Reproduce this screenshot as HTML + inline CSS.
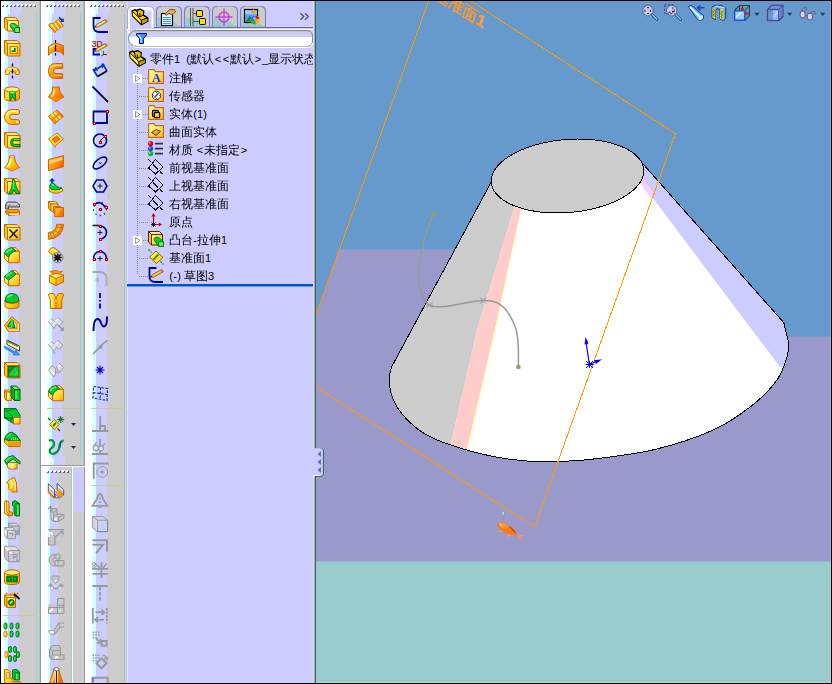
<!DOCTYPE html><html><head><meta charset="utf-8"><title>SolidWorks</title><style>
html,body{margin:0;padding:0;background:#000}body{width:832px;height:684px;overflow:hidden}svg{display:block}text{font-family:"Liberation Sans","WenQuanYi Zen Hei","Noto Sans CJK SC",sans-serif;font-size:12px}.cr{shape-rendering:crispEdges}
</style></head><body>
<svg width="832" height="684" viewBox="0 0 832 684">
<defs>
<linearGradient id="tabg" x1="0" y1="0" x2="0" y2="1"><stop offset="0" stop-color="#cccccc"/><stop offset="0.55" stop-color="#cccccc"/><stop offset="1" stop-color="#99cccc"/></linearGradient>
<linearGradient id="taba" x1="0" y1="0" x2="0" y2="1"><stop offset="0" stop-color="#ffffff"/><stop offset="0.6" stop-color="#ffffff"/><stop offset="1" stop-color="#e0e0ff"/></linearGradient>
<linearGradient id="fbox" x1="0" y1="0" x2="0" y2="1"><stop offset="0" stop-color="#bbbbbb"/><stop offset="0.12" stop-color="#cccccc"/><stop offset="0.16" stop-color="#ccccff"/><stop offset="0.4" stop-color="#ccccff"/><stop offset="0.44" stop-color="#ffffff"/><stop offset="1" stop-color="#ffffff"/></linearGradient>
<linearGradient id="tabhl" x1="0" y1="0" x2="0" y2="1"><stop offset="0" stop-color="#e8ffff"/><stop offset="1" stop-color="#ccccff"/></linearGradient>
<linearGradient id="fold" x1="0" y1="0" x2="1" y2="1"><stop offset="0" stop-color="#ffffaa"/><stop offset="0.45" stop-color="#ffee77"/><stop offset="1" stop-color="#ffbb22"/></linearGradient>
<clipPath id="cpanel"><rect x="127" y="1" width="186" height="682"/></clipPath>
<clipPath id="cview"><rect x="316" y="1" width="515" height="682"/></clipPath>
<clipPath id="ctb"><rect x="1" y="1" width="126" height="682"/></clipPath>
</defs>
<rect x="0" y="0" width="832" height="684" fill="#000" />
<g id="toolbars" clip-path="url(#ctb)" class="cr">
<rect x="-3" y="1" width="10" height="13" fill="#ffffff" /><rect x="7" y="1" width="3" height="13" fill="#ccffff" /><rect x="10" y="1" width="11" height="13" fill="#ccccff" /><rect x="21" y="1" width="18" height="13" fill="#cccccc" /><rect x="39" y="1" width="1" height="13" fill="#99cccc" /><rect x="40" y="1" width="1" height="13" fill="#999999" /><rect x="-3" y="14" width="8" height="669" fill="#ffffff" /><rect x="5" y="14" width="3" height="669" fill="#ccffff" /><rect x="8" y="14" width="11" height="669" fill="#ccccff" /><rect x="19" y="14" width="17" height="669" fill="#cccccc" /><rect x="36" y="14" width="1" height="669" fill="#99cccc" /><rect x="37" y="14" width="2" height="669" fill="#cccccc" /><rect x="39" y="14" width="1" height="669" fill="#99cccc" /><rect x="40" y="14" width="1" height="669" fill="#999999" />
<rect x="41" y="1" width="10" height="13" fill="#ffffff" /><rect x="51" y="1" width="3" height="13" fill="#ccffff" /><rect x="54" y="1" width="11" height="13" fill="#ccccff" /><rect x="65" y="1" width="18" height="13" fill="#cccccc" /><rect x="83" y="1" width="1" height="13" fill="#99cccc" /><rect x="84" y="1" width="1" height="13" fill="#999999" /><rect x="41" y="14" width="8" height="444" fill="#ffffff" /><rect x="49" y="14" width="3" height="444" fill="#ccffff" /><rect x="52" y="14" width="11" height="444" fill="#ccccff" /><rect x="63" y="14" width="17" height="444" fill="#cccccc" /><rect x="80" y="14" width="1" height="444" fill="#99cccc" /><rect x="81" y="14" width="2" height="444" fill="#cccccc" /><rect x="83" y="14" width="1" height="444" fill="#99cccc" /><rect x="84" y="14" width="1" height="444" fill="#999999" /><rect x="41" y="458" width="10" height="7" fill="#ffffff" /><rect x="51" y="458" width="3" height="7" fill="#ccffff" /><rect x="54" y="458" width="11" height="7" fill="#ccccff" /><rect x="65" y="458" width="18" height="7" fill="#cccccc" /><rect x="83" y="458" width="1" height="7" fill="#99cccc" /><rect x="84" y="458" width="1" height="7" fill="#999999" />
<rect x="85" y="1" width="10" height="13" fill="#ffffff" /><rect x="95" y="1" width="3" height="13" fill="#ccffff" /><rect x="98" y="1" width="11" height="13" fill="#ccccff" /><rect x="109" y="1" width="18" height="13" fill="#cccccc" /><rect x="85" y="14" width="8" height="669" fill="#ffffff" /><rect x="93" y="14" width="3" height="669" fill="#ccffff" /><rect x="96" y="14" width="11" height="669" fill="#ccccff" /><rect x="107" y="14" width="17" height="669" fill="#cccccc" /><rect x="124" y="14" width="1" height="669" fill="#99cccc" /><rect x="125" y="14" width="2" height="669" fill="#cccccc" />
<rect x="2" y="5" width="2" height="2" fill="#666" /><rect x="1" y="4" width="2" height="2" fill="#fff" /><rect x="6" y="5" width="2" height="2" fill="#666" /><rect x="5" y="4" width="2" height="2" fill="#fff" /><rect x="10" y="5" width="2" height="2" fill="#666" /><rect x="9" y="4" width="2" height="2" fill="#fff" /><rect x="14" y="5" width="2" height="2" fill="#666" /><rect x="13" y="4" width="2" height="2" fill="#fff" /><rect x="18" y="5" width="2" height="2" fill="#666" /><rect x="17" y="4" width="2" height="2" fill="#fff" /><rect x="22" y="5" width="2" height="2" fill="#666" /><rect x="21" y="4" width="2" height="2" fill="#fff" /><rect x="26" y="5" width="2" height="2" fill="#666" /><rect x="25" y="4" width="2" height="2" fill="#fff" /><rect x="30" y="5" width="2" height="2" fill="#666" /><rect x="29" y="4" width="2" height="2" fill="#fff" /><rect x="34" y="5" width="2" height="2" fill="#666" /><rect x="33" y="4" width="2" height="2" fill="#fff" /><rect x="46" y="5" width="2" height="2" fill="#666" /><rect x="45" y="4" width="2" height="2" fill="#fff" /><rect x="50" y="5" width="2" height="2" fill="#666" /><rect x="49" y="4" width="2" height="2" fill="#fff" /><rect x="54" y="5" width="2" height="2" fill="#666" /><rect x="53" y="4" width="2" height="2" fill="#fff" /><rect x="58" y="5" width="2" height="2" fill="#666" /><rect x="57" y="4" width="2" height="2" fill="#fff" /><rect x="62" y="5" width="2" height="2" fill="#666" /><rect x="61" y="4" width="2" height="2" fill="#fff" /><rect x="66" y="5" width="2" height="2" fill="#666" /><rect x="65" y="4" width="2" height="2" fill="#fff" /><rect x="70" y="5" width="2" height="2" fill="#666" /><rect x="69" y="4" width="2" height="2" fill="#fff" /><rect x="74" y="5" width="2" height="2" fill="#666" /><rect x="73" y="4" width="2" height="2" fill="#fff" /><rect x="78" y="5" width="2" height="2" fill="#666" /><rect x="77" y="4" width="2" height="2" fill="#fff" /><rect x="90" y="5" width="2" height="2" fill="#666" /><rect x="89" y="4" width="2" height="2" fill="#fff" /><rect x="94" y="5" width="2" height="2" fill="#666" /><rect x="93" y="4" width="2" height="2" fill="#fff" /><rect x="98" y="5" width="2" height="2" fill="#666" /><rect x="97" y="4" width="2" height="2" fill="#fff" /><rect x="102" y="5" width="2" height="2" fill="#666" /><rect x="101" y="4" width="2" height="2" fill="#fff" /><rect x="106" y="5" width="2" height="2" fill="#666" /><rect x="105" y="4" width="2" height="2" fill="#fff" /><rect x="110" y="5" width="2" height="2" fill="#666" /><rect x="109" y="4" width="2" height="2" fill="#fff" /><rect x="114" y="5" width="2" height="2" fill="#666" /><rect x="113" y="4" width="2" height="2" fill="#fff" /><rect x="118" y="5" width="2" height="2" fill="#666" /><rect x="117" y="4" width="2" height="2" fill="#fff" /><rect x="122" y="5" width="2" height="2" fill="#666" /><rect x="121" y="4" width="2" height="2" fill="#fff" />
<rect x="40" y="465" width="45" height="1" fill="#999999" /><rect x="41" y="466" width="44" height="1" fill="#ffffff" />
<rect x="41" y="467" width="7" height="216" fill="#ffffff"/><rect x="48" y="467" width="2" height="216" fill="#ccffff"/><rect x="50" y="467" width="8" height="216" fill="#ccccff"/><rect x="58" y="467" width="13" height="216" fill="#cccccc"/><rect x="71" y="467" width="1" height="216" fill="#99cccc"/><rect x="72" y="467" width="1" height="216" fill="#ffffff"/>
<rect x="73" y="467" width="11" height="45" fill="#ccccff"/><rect x="73" y="512" width="11" height="171" fill="#cccccc"/><rect x="84" y="467" width="1" height="216" fill="#999999"/>
<rect x="47" y="471" width="2" height="2" fill="#666"/><rect x="46" y="470" width="2" height="2" fill="#fff"/>
<rect x="51" y="471" width="2" height="2" fill="#666"/><rect x="50" y="470" width="2" height="2" fill="#fff"/>
<rect x="55" y="471" width="2" height="2" fill="#666"/><rect x="54" y="470" width="2" height="2" fill="#fff"/>
<rect x="59" y="471" width="2" height="2" fill="#666"/><rect x="58" y="470" width="2" height="2" fill="#fff"/>
<rect x="63" y="471" width="2" height="2" fill="#666"/><rect x="62" y="470" width="2" height="2" fill="#fff"/>
<rect x="67" y="471" width="2" height="2" fill="#666"/><rect x="66" y="470" width="2" height="2" fill="#fff"/>
</g>
<g id="icons" clip-path="url(#ctb)">
<defs><linearGradient id="yg" x1="0" y1="0" x2="1" y2="1"><stop offset="0" stop-color="#ffff99"/><stop offset="0.5" stop-color="#ffdd33"/><stop offset="1" stop-color="#ffaa00"/></linearGradient><linearGradient id="yh" x1="0" y1="0" x2="1" y2="0.6"><stop offset="0" stop-color="#ffee44"/><stop offset="0.6" stop-color="#ffcc00"/><stop offset="1" stop-color="#ff9900"/></linearGradient><linearGradient id="og" x1="0" y1="0" x2="1" y2="0.5"><stop offset="0" stop-color="#ffcc33"/><stop offset="0.5" stop-color="#ff9900"/><stop offset="1" stop-color="#ff6600"/></linearGradient></defs>
<g transform="translate(4,17)"><path d="M3.5 3.5L0.5 0.5H11.5L14.5 3.5Z" fill="#ffee77" stroke="#cc6600" stroke-width="1" /><path d="M3.5 3.5L0.5 0.5V11L3.5 14Z" fill="#ffcc00" stroke="#cc6600" stroke-width="1" /><path d="M3.5 3.5H14.5V14H3.5Z" fill="url(#yg)" stroke="#cc6600" stroke-width="1" /><path d="M4.5 4.5H13.5V13H4.5Z" fill="#ffffcc" opacity="0.6"/><path d="M6.2 7.5L7.7 6L11 6.7L15.5 10.7V15.5H10.7L6.2 9.2Z" fill="#00cc33" stroke="#006600" stroke-width="0.8" stroke-linejoin="miter"/><path d="M10.7 10.7H15.5V15.5H10.7Z" fill="#66ee66" stroke="#006600" stroke-width="0.8" /><path d="M7.5 7.3L11 10.2" fill="none" stroke="#66ee66" stroke-width="1.2" /></g>
<g transform="translate(4,40)"><path d="M3.5 3.5L0.5 0.5H13L16 3.5Z" fill="#ffee77" stroke="#cc6600" stroke-width="1" /><path d="M3.5 3.5L0.5 0.5V13L3.5 16Z" fill="#ffcc00" stroke="#cc6600" stroke-width="1" /><path d="M3.5 3.5H16V16H3.5Z" fill="url(#yg)" stroke="#cc6600" stroke-width="1" /><path d="M6 6.5H13.5V13.5H6Z" fill="#ffdd55" stroke="#cc7700" stroke-width="1.2" /><path d="M7.5 8H12V12H7.5Z" fill="#00cc33" /><path d="M7.5 8H10V10H7.5Z" fill="#ffffff" /><path d="M10.5 8V11.5H8" fill="none" stroke="#006600" stroke-width="0.8" /></g>
<g transform="translate(4,63)"><path d="M1 9.5Q1 6 4 5Q8 3 12.5 5Q15.5 6 15.5 9.5A2.2 2.2 0 0 1 11 9.5Q11 8.5 8.3 8.5Q5.5 8.5 5.5 9.5A2.2 2.2 0 0 1 1 9.5Z" fill="url(#yh)" stroke="#cc6600" stroke-width="1" /><path d="M3 6.5Q8 4 13 6.5" fill="none" stroke="#ffffaa" stroke-width="1.3" /><circle cx="3.2" cy="9.6" r="1.3" fill="#ffee77"/><circle cx="13.3" cy="9.6" r="1.3" fill="#ffee77"/><path d="M8.5 0.5V16" fill="none" stroke="#000" stroke-width="1.2" stroke-dasharray="3 2 5 2"/></g>
<g transform="translate(4,86)"><path d="M0.5 3.5V12.5A7.5 2.6 0 0 0 15.5 12.5V3.5Z" fill="url(#yh)" stroke="#cc6600" stroke-width="1" /><ellipse cx="8" cy="3.5" rx="7.5" ry="2.6" fill="#ffee77" stroke="#cc6600" stroke-width="1"/><path d="M5.5 6.5L8 5L11.5 6.5V14.5L8.5 11L6 15Z" fill="#00cc33" stroke="#006600" stroke-width="0.8" /><path d="M8.3 5V11" fill="none" stroke="#006600" stroke-width="0.8" /><path d="M5.5 6.5L8 5L11.5 6.5L8.3 8Z" fill="#66ee66" /></g>
<g transform="translate(4,109)"><path d="M13.2 0.5H8A7.5 7.5 0 0 0 8 15.5H13.2A2.5 2.5 0 0 0 13.2 10.5H8A2.5 2.5 0 0 1 8 5.5H13.2A2.5 2.5 0 0 0 13.2 0.5Z" fill="url(#yh)" stroke="#cc6600" stroke-width="1" /><path d="M2.5 6Q4 2.5 8.5 2.3H12" fill="none" stroke="#ffffaa" stroke-width="1.6" /><circle cx="13.2" cy="3" r="1.4" fill="#ffee88"/><circle cx="13.2" cy="13" r="1.4" fill="#ffee88"/></g>
<g transform="translate(4,132)"><path d="M3.5 3.5L0.5 0.5H13L16 3.5Z" fill="#ffee77" stroke="#cc6600" stroke-width="1" /><path d="M3.5 3.5L0.5 0.5V13L3.5 16Z" fill="#ffcc00" stroke="#cc6600" stroke-width="1" /><path d="M3.5 3.5H16V16H3.5Z" fill="url(#yg)" stroke="#cc6600" stroke-width="1" /><path d="M16 6.5H10.5A4 4 0 0 0 10.5 14.5H16V12.5H10.5A2 2 0 0 1 10.5 8.5H16Z" fill="#00cc33" stroke="#006600" stroke-width="0.8" /><path d="M10.5 7.3H15.5" fill="none" stroke="#66ee66" stroke-width="1" /></g>
<g transform="translate(4,155)"><path d="M5.5 1Q8 -0.3 10.5 1Q10.5 8 15.5 12.5L8 16L0.5 12.5Q5.5 8 5.5 1Z" fill="url(#yh)" stroke="#cc6600" stroke-width="1" /><ellipse cx="8" cy="1.5" rx="2.2" ry="0.9" fill="#ffffcc" stroke="#cc6600" stroke-width="0.5"/><path d="M6.8 4Q6.5 9 3.5 12" fill="none" stroke="#ffffaa" stroke-width="1.5" /><path d="M0.5 12.5L8 16L15.5 12.5L8 13.8Z" fill="#ff9900" /></g>
<g transform="translate(4,178)"><path d="M3.5 3.5L0.5 0.5H13L16 3.5Z" fill="#ffee77" stroke="#cc6600" stroke-width="1" /><path d="M3.5 3.5L0.5 0.5V13L3.5 16Z" fill="#ffcc00" stroke="#cc6600" stroke-width="1" /><path d="M3.5 3.5H16V16H3.5Z" fill="url(#yg)" stroke="#cc6600" stroke-width="1" /><path d="M8.5 1Q11 1 11 4Q11.5 10 16 15.5L12 15.5L9.8 12L7.5 16H4.5Q8.5 10 8.5 4Z" fill="#00cc33" stroke="#006600" stroke-width="0.8" /><path d="M9.5 3V11" fill="none" stroke="#66ee66" stroke-width="1.2" /></g>
<g transform="translate(4,201)"><path d="M1.5 4L3 1H12L15.5 3.5V6H4.5V8H1.5Z" fill="#aaaaaa" stroke="#444444" stroke-width="0.9" /><path d="M3 3H13.5" fill="none" stroke="#e0e0e0" stroke-width="1.4" /><path d="M4.5 6L5.5 3.5" fill="none" stroke="#444" stroke-width="0.7" /><path d="M4 8.5H14.5L15.5 10L13 11.5H4L1 10.5Z" fill="#ff9900" stroke="#cc6600" stroke-width="0.9" /><path d="M1 11L4.5 14.5L15.5 13.5V10.5L12.5 12H4Z" fill="#ffcc00" stroke="#cc6600" stroke-width="0.9" /><path d="M4.5 12.5V14.5" fill="none" stroke="#cc6600" stroke-width="0.8" /><path d="M5.5 13.3H14.5" fill="none" stroke="#ffffaa" stroke-width="1.2" /></g>
<g transform="translate(4,224)"><path d="M3.5 3.5L0.5 0.5H13L16 3.5Z" fill="#ffee77" stroke="#cc6600" stroke-width="1" /><path d="M3.5 3.5L0.5 0.5V13L3.5 16Z" fill="#ffcc00" stroke="#cc6600" stroke-width="1" /><path d="M3.5 3.5H16V16H3.5Z" fill="url(#yg)" stroke="#cc6600" stroke-width="1" /><path d="M5.5 5.5L13.5 14M13.5 5.5L5.5 14" fill="none" stroke="#222233" stroke-width="1.8" /></g>
<g transform="translate(4,247)"><path d="M0.4 6.5L4.7 10.1V15.7L0.4 11.7Z" fill="#ffee55" stroke="#cc6600" stroke-width="1" /><path d="M7.9 0.6H11.9L15.4 4.5L12 4Z" fill="#ffee66" stroke="#cc6600" stroke-width="1" /><path d="M4.7 15.7V10.1Q6 5 12 4L15.4 4.5V15.7Z" fill="url(#yg)" stroke="#cc6600" stroke-width="1" /><path d="M0.4 6.5Q1.5 1.5 7.9 0.6L12 4Q6 5 4.7 10.1Z" fill="#00cc33" stroke="#006600" stroke-width="0.8" /><path d="M2 6Q3.5 3 8 2" fill="none" stroke="#66ee66" stroke-width="1.3" /></g>
<g transform="translate(4,270)"><path d="M0.4 6.5L4.7 10.1V15.7L0.4 11.7Z" fill="#ffee55" stroke="#cc6600" stroke-width="1" /><path d="M7.9 0.6H11.9L15.4 4.5L12 4Z" fill="#ffee66" stroke="#cc6600" stroke-width="1" /><path d="M4.7 15.7V10.1L12 4L15.4 4.5V15.7Z" fill="url(#yg)" stroke="#cc6600" stroke-width="1" /><path d="M0.4 6.5L7.9 0.6L12 4L4.7 10.1Z" fill="#00cc33" stroke="#006600" stroke-width="0.8" /><path d="M2 6.5L8 2" fill="none" stroke="#66ee66" stroke-width="1.3" /></g>
<g transform="translate(4,293)"><path d="M1 8V13.3A7 2.4 0 0 0 15 13.3V8Z" fill="url(#yh)" stroke="#cc6600" stroke-width="1" /><ellipse cx="8" cy="8" rx="7" ry="2.4" fill="#ffcc00" stroke="#cc6600" stroke-width="1"/><path d="M1 8Q1 0.5 8 0.5Q15 0.5 15 8Q8 11.5 1 8Z" fill="#00cc33" stroke="#006600" stroke-width="0.8" /><path d="M3.5 4.5Q5.5 2 8.5 2.5" fill="none" stroke="#66ee66" stroke-width="1.6" /></g>
<g transform="translate(4,316)"><path d="M7.9 0.6L15.4 7.3V15.3H4.3L0.4 9.3Z" fill="#ffcc00" stroke="#cc6600" stroke-width="1" /><path d="M8.2 3.2L12.8 8.2V12.8H5.6L2.8 9.6Z" fill="#ccccff" stroke="#cc6600" stroke-width="0.8" /><path d="M8.3 3L11 11.8L3.6 10.4Z" fill="#00cc33" stroke="#006600" stroke-width="0.8" /><path d="M8.3 3L7.5 11" fill="none" stroke="#66ee66" stroke-width="1.1" /><path d="M5 14.2H14.5M14.3 8V14" fill="none" stroke="#ffffaa" stroke-width="1.1" /></g>
<g transform="translate(4,339)"><path d="M3 1L15.5 7V12L3 5.5Z" fill="#ffff99" stroke="#333333" stroke-width="0.9" /><path d="M5 2V4M7 3V5M9 4V6M11 5V7M13 6V8" fill="none" stroke="#222" stroke-width="1" /><path d="M0.5 7L11 13L12 11L15.5 16H9L10 14.5L0.5 9Z" fill="#3399ff" stroke="#0066cc" stroke-width="0.6" /></g>
<g transform="translate(4,362)"><path d="M3.5 3.5L0.5 0.5H13L16 3.5Z" fill="#ffee77" stroke="#cc6600" stroke-width="1" /><path d="M3.5 3.5L0.5 0.5V13L3.5 16Z" fill="#ffcc00" stroke="#cc6600" stroke-width="1" /><path d="M3.5 3.5H16V16H3.5Z" fill="url(#yg)" stroke="#cc6600" stroke-width="1" /><path d="M4.5 4.5H15V15H4.5Z" fill="#00cc33" stroke="#006600" stroke-width="0.8" /><path d="M4.5 4.5H11V11H4.5Z" fill="#009922" stroke="#006600" stroke-width="0.7" /><path d="M11 11L15 15" fill="none" stroke="#006600" stroke-width="0.8" /><path d="M11.5 5L14.5 14L5 11.5Z" fill="#66ee66" opacity="0.5"/></g>
<g transform="translate(4,385)"><path d="M2.5 7L0.5 5H5.5L7.5 7Z" fill="#ffee77" stroke="#cc6600" stroke-width="1" /><path d="M2.5 7L0.5 5V13.5L2.5 15.5Z" fill="#ffcc00" stroke="#cc6600" stroke-width="1" /><path d="M2.5 7H7.5V15.5H2.5Z" fill="url(#yg)" stroke="#cc6600" stroke-width="1" /><path d="M10.5 4.5L7 1H12.5L16 4.5Z" fill="#66ee66" stroke="#006600" stroke-width="1" /><path d="M10.5 4.5L7 1V12L10.5 15.5Z" fill="#00aa22" stroke="#006600" stroke-width="1" /><path d="M10.5 4.5H16V15.5H10.5Z" fill="#00cc33" stroke="#006600" stroke-width="1" /><path d="M12 6V14" fill="none" stroke="#66ee66" stroke-width="1.4" /><path d="M4 8.5V14" fill="none" stroke="#ffffaa" stroke-width="1.2" /></g>
<g transform="translate(4,408)"><path d="M0.5 0.5H12L16 7V10H10L0.5 10Z" fill="#00cc33" stroke="#006600" stroke-width="0.9" /><path d="M0.5 0.5L10.5 10.5M12 0.5L3 3" fill="none" stroke="#006600" stroke-width="0.7" /><path d="M0.5 10L9.5 15.5V10Z" fill="#00aa22" stroke="#006600" stroke-width="0.8" /><path d="M9.5 9.5H16V16H9.5Z" fill="url(#yg)" stroke="#cc6600" stroke-width="1" /></g>
<g transform="translate(4,431)"><path d="M0.5 8.5L5 13H16V8.5Z" fill="#ffcc00" stroke="#cc6600" stroke-width="1" /><path d="M5 9.5H16V15.5H5L0.5 11.5V8.5Z" fill="#ffcc00" stroke="#cc6600" stroke-width="1" /><path d="M5 9.5V15.5" fill="none" stroke="#cc6600" stroke-width="0.8" /><path d="M6 10.5H15.5V15H6Z" fill="#ff9900" /><path d="M0.5 8Q2 2 8 1Q13 3 16 9.5H5Z" fill="#00cc33" stroke="#006600" stroke-width="0.9" /><path d="M5 9.5Q7 5.5 11 5.5Q14.5 6.5 16 9.5" fill="#00cc33" stroke="#006600" stroke-width="0.8" /><path d="M2.5 6L7.5 2.5M7.5 9V6.5M9.5 9V6M11.5 9V6M13.5 9V7.5" fill="none" stroke="#66ee66" stroke-width="1" /></g>
<g transform="translate(4,454)"><path d="M3.5 8.5H13V15H5.5L3.5 13Z" fill="url(#yg)" stroke="#cc6600" stroke-width="1" /><path d="M7 9.5H9.5V14.5H7Z" fill="#ffffcc" /><path d="M0.5 6.5Q4 2 9 1.5Q12 4 16 7.5V10Q13 8.5 9.5 5Q6 6 2.5 10.5Z" fill="#00cc33" stroke="#006600" stroke-width="0.9" /><path d="M2 7Q5 3.5 8.5 3" fill="none" stroke="#66ee66" stroke-width="1.2" /></g>
<g transform="translate(4,477)"><path d="M7 1.5L10.5 0.5Q13.5 6 13 15.5L8.5 15L4 11.5Q5.5 9 4.5 7L2.5 5.5Z" fill="url(#yh)" stroke="#cc6600" stroke-width="1" /><path d="M6.5 3Q9 6 7.5 11M9.5 2Q12 7 11 13.5" fill="none" stroke="#ffffcc" stroke-width="1.3" /><path d="M4 11.5L8.5 15L13 15.5" fill="none" stroke="#ff9900" stroke-width="1" /></g>
<g transform="translate(4,500)"><path d="M0.5 1.5L2.5 0.5L5 2V11.5L8.5 12.5V15.5L4.5 16L0.5 13Z" fill="url(#yh)" stroke="#cc6600" stroke-width="1" /><path d="M2.5 0.5V12L4.5 13.5V16" fill="none" stroke="#cc6600" stroke-width="0.8" /><path d="M1.5 2.5V12" fill="none" stroke="#ffffaa" stroke-width="1.2" /><path d="M8.5 2L11 0.5L15.5 3.5V16H12L10 14.5V6.5L8.5 5.5Z" fill="#00cc33" stroke="#006600" stroke-width="0.9" /><path d="M12 3.5V16M12 3.5L15.5 3.5" fill="none" stroke="#006600" stroke-width="0.7" /><path d="M13.8 5V15" fill="none" stroke="#66ee66" stroke-width="1.3" /></g>
<g transform="translate(4,523)"><path d="M7.5 3.2L4.5 0.2H12.4L15.4 3.2Z" fill="#d8d8d8" stroke="#999999" stroke-width="1" /><path d="M7.5 3.2L4.5 0.2V8.7L7.5 11.7Z" fill="#c0c0c0" stroke="#999999" stroke-width="1" /><path d="M7.5 3.2H15.4V11.7H7.5Z" fill="#c8c8c8" stroke="#999999" stroke-width="1" /><path d="M12 8.5L15 5V11.3L12 11.3Z" fill="#9999cc" /><path d="M3.5 7.5L0.5 4.5H8.5L11.5 7.5Z" fill="#dddddd" stroke="#999999" stroke-width="1" /><path d="M3.5 7.5L0.5 4.5V12.7L3.5 15.7Z" fill="#ccddee" stroke="#999999" stroke-width="1" /><path d="M3.5 7.5H11.5V15.7H3.5Z" fill="#cccccc" stroke="#999999" stroke-width="1" /><path d="M1.2 6.5V11.5" fill="none" stroke="#ffffff" stroke-width="1.4" /><path d="M5 10.5H8.5V13" fill="none" stroke="#9999cc" stroke-width="1.2" /><path d="M4.5 8.5L7 8.5" fill="none" stroke="#ccffff" stroke-width="1.2" /></g>
<g transform="translate(4,546)"><path d="M4.7 4.5L0.5 0.3H11.2L15.4 4.5Z" fill="#dddddd" stroke="#999999" stroke-width="1" /><path d="M4.7 4.5L0.5 0.3V11.5L4.7 15.7Z" fill="#c4c4d8" stroke="#999999" stroke-width="1" /><path d="M4.7 4.5H15.4V15.7H4.7Z" fill="#cccccc" stroke="#999999" stroke-width="1" /><path d="M1.5 1.5L4.5 4.5" fill="none" stroke="#ffffff" stroke-width="1.8" /><path d="M7 8.5H13V11H9.5V13" fill="none" stroke="#9999cc" stroke-width="1.3" /><path d="M12 12.5L15 15.3H12Z" fill="#9999cc" /><path d="M5.5 6L8 8" fill="none" stroke="#ffffff" stroke-width="1.4" /></g>
<g transform="translate(4,569)"><path d="M0.5 3.5V13A7.5 2.6 0 0 0 15.5 13V3.5Z" fill="url(#yh)" stroke="#cc6600" stroke-width="1" /><ellipse cx="8" cy="3.5" rx="7.5" ry="2.6" fill="#ffee77" stroke="#cc6600" stroke-width="1"/><path d="M2.5 7H13.5V13H2.5Z" fill="#00cc33" stroke="#006600" stroke-width="0.7" /><path d="M7.5 8H4V12H7.5V10.3H6M9.5 8H12.5V12H9.5Z" fill="none" stroke="#007700" stroke-width="1.4" /></g>
<g transform="translate(4,592)"><path d="M3 5.5L0.5 3H9L11.5 5.5Z" fill="#ffee77" stroke="#cc6600" stroke-width="1" /><path d="M3 5.5L0.5 3V13L3 15.5Z" fill="#ffcc00" stroke="#cc6600" stroke-width="1" /><path d="M3 5.5H11.5V15.5H3Z" fill="url(#yg)" stroke="#cc6600" stroke-width="1" /><circle cx="7.3" cy="10.5" r="3" fill="#009922" stroke="#005500" stroke-width="0.8"/><path d="M6 11.5L8.5 9" fill="none" stroke="#ccffcc" stroke-width="1.2" /><path d="M9 1L15.5 7" fill="none" stroke="#111111" stroke-width="2" /><path d="M8.5 0.5L10 2" fill="none" stroke="#ffcc00" stroke-width="2" /><path d="M1.5 1.5h2M2.5 0.5v2M5.5 2.5h2M6.5 1.5v2M12.5 1.5h2M13.5 0.5v2" fill="none" stroke="#ff6600" stroke-width="1" /></g>
<g transform="translate(4,623)"><rect x="0" y="0" width="3" height="6" rx="1.5" fill="#00cc33" stroke="#006600" stroke-width="0.8"/><path d="M1 1.5v3" fill="none" stroke="#66ee66" stroke-width="0.8" /><rect x="6" y="0" width="3" height="6" rx="1.5" fill="#00cc33" stroke="#006600" stroke-width="0.8"/><path d="M7 1.5v3" fill="none" stroke="#66ee66" stroke-width="0.8" /><rect x="12" y="0" width="3" height="6" rx="1.5" fill="#00cc33" stroke="#006600" stroke-width="0.8"/><path d="M13 1.5v3" fill="none" stroke="#66ee66" stroke-width="0.8" /><rect x="0" y="8" width="3" height="6" rx="1.5" fill="#ffcc00" stroke="#cc6600" stroke-width="0.8"/><path d="M1 9.5v3" fill="none" stroke="#ffffaa" stroke-width="0.8" /><rect x="6" y="8" width="3" height="6" rx="1.5" fill="#00cc33" stroke="#006600" stroke-width="0.8"/><path d="M7 9.5v3" fill="none" stroke="#66ee66" stroke-width="0.8" /><rect x="12" y="8" width="3" height="6" rx="1.5" fill="#00cc33" stroke="#006600" stroke-width="0.8"/><path d="M13 9.5v3" fill="none" stroke="#66ee66" stroke-width="0.8" /></g>
<g transform="translate(4,646)"><rect x="4.5" y="0.5" width="3" height="6" rx="1.5" fill="#00cc33" stroke="#006600" stroke-width="0.8"/><path d="M5.5 2v3" fill="none" stroke="#66ee66" stroke-width="0.8" /><rect x="9.5" y="0.5" width="3" height="6" rx="1.5" fill="#00cc33" stroke="#006600" stroke-width="0.8"/><path d="M10.5 2v3" fill="none" stroke="#66ee66" stroke-width="0.8" /><rect x="12.5" y="5.5" width="3" height="6" rx="1.5" fill="#00cc33" stroke="#006600" stroke-width="0.8"/><path d="M13.5 7v3" fill="none" stroke="#66ee66" stroke-width="0.8" /><rect x="9.5" y="9.5" width="3" height="6" rx="1.5" fill="#00cc33" stroke="#006600" stroke-width="0.8"/><path d="M10.5 11v3" fill="none" stroke="#66ee66" stroke-width="0.8" /><rect x="4.5" y="9.5" width="3" height="6" rx="1.5" fill="#00cc33" stroke="#006600" stroke-width="0.8"/><path d="M5.5 11v3" fill="none" stroke="#66ee66" stroke-width="0.8" /><rect x="1" y="5.5" width="3" height="6" rx="1.5" fill="#ffcc00" stroke="#cc6600" stroke-width="0.8"/><path d="M2 7v3" fill="none" stroke="#ffffaa" stroke-width="0.8" /></g>
<g transform="translate(4,669)"><path d="M0.5 0.5H4L6 2.5V9L9 10.5V12.5H16V16H3L0.5 13Z" fill="url(#yh)" stroke="#cc6600" stroke-width="1" /><path d="M2.5 3.5H5V9.5H2.5Z" fill="#ffff99" stroke="#cc6600" stroke-width="0.6" /><path d="M8.5 1L10.5 0.5H13L15.5 3V11H11L8.5 9Z" fill="#00cc33" stroke="#006600" stroke-width="0.9" /><path d="M11 3.5H15.5M11 3.5V11" fill="none" stroke="#006600" stroke-width="0.7" /><path d="M12.8 5V10" fill="none" stroke="#66ee66" stroke-width="1.4" /></g>
<rect x="3" y="615" width="34" height="1" fill="#cccc99"/>
<g transform="translate(48,17)"><path d="M0.5 8Q3 5 5.5 6.5Q8 3.5 10.7 2.6L15.5 8.9Q12.5 10 10.5 12.5Q8.5 12.5 6.8 15.7Z" fill="url(#og)" stroke="#cc6600" stroke-width="0.9" /><path d="M3 7L8 13.5M6.5 5.8L11 12M9.5 3.8L14 9.5" fill="none" stroke="#ffee66" stroke-width="1.5" /><path d="M11 0.5L14.5 3.5" fill="none" stroke="#0033cc" stroke-width="1.8" /><path d="M15.8 1.2V5H11.8Z" fill="#0033cc" /></g>
<g transform="translate(48,40)"><path d="M0.5 6.5Q4 3.5 8 3.5Q12 3.5 15.5 6V15Q13 11 8 11Q3.5 11 0.5 15.3Z" fill="url(#og)" stroke="#cc6600" stroke-width="1" /><path d="M2 8Q4.5 5.5 7 5.2" fill="none" stroke="#ffee77" stroke-width="1.5" /><path d="M7.5 0V15.5" fill="none" stroke="#000" stroke-width="1.2" stroke-dasharray="3 2 6 2"/></g>
<g transform="translate(48,63)"><path d="M14.7 0.5H7.5Q0.5 0.5 0.5 8Q0.5 15.5 7.5 15.5H14.7V10.5H8Q5.5 10.5 5.5 8Q5.5 5.5 8 5.5H14.7Z" fill="url(#og)" stroke="#cc6600" stroke-width="1" /><path d="M2.5 5Q4 2.5 8 2.3H13.5" fill="none" stroke="#ffdd66" stroke-width="1.5" /><path d="M6 12.5H14" fill="none" stroke="#ffcc55" stroke-width="1.2" /></g>
<g transform="translate(48,86)"><path d="M4.8 0.5Q8 2.5 11.1 0.5Q10.5 6 15.8 11L8 15.8L0.4 11Q5.5 6 4.8 0.5Z" fill="url(#og)" stroke="#cc6600" stroke-width="1" /><path d="M6.5 3Q6.5 8 3.5 11" fill="none" stroke="#ffdd88" stroke-width="1.6" /><path d="M0.4 11L8 15.8L15.8 11Q8 13.5 0.4 11Z" fill="#ff8800" /></g>
<g transform="translate(48,109)"><path d="M0.4 7.3L9.1 1L15.5 7.3L6.8 14.9Z" fill="url(#og)" stroke="#cc6600" stroke-width="0.9" /><path d="M3.5 5L9.5 11.5M6.5 3L12.5 9.5" fill="none" stroke="#ffee66" stroke-width="2" /><path d="M3.6 11L12.3 4.2" fill="none" stroke="#ff7700" stroke-width="1.6" /></g>
<g transform="translate(48,132)"><path d="M0.4 6.9L9.1 1L15.5 6.9L6.8 14.5Z" fill="#ffdd33" stroke="#cc6600" stroke-width="0.9" /><path d="M4 7L8.8 3.8L12 7L7.2 11Z" fill="#ff7700" stroke="#cc5500" stroke-width="0.7" /><path d="M2 7L9 2.2" fill="none" stroke="#ffffaa" stroke-width="1.2" /><path d="M6.8 14.5L7.5 15.8" fill="none" stroke="#cc6600" stroke-width="1" /></g>
<g transform="translate(48,155)"><path d="M0.5 4.5L15.5 0.6V11.7L0.5 15.7Z" fill="url(#og)" stroke="#cc6600" stroke-width="1" /><path d="M1.5 5.5L14.5 2V5L1.5 9Z" fill="#ffcc77" /></g>
<g transform="translate(48,178)"><path d="M1.2 11Q8 9 14.7 11V13Q8 17.5 1.2 13Z" fill="#ffcc00" stroke="#cc6600" stroke-width="1" /><path d="M2 11.5Q8 13.5 14 11.5" fill="none" stroke="#ffffaa" stroke-width="1" /><path d="M1.8 10Q1.5 4.5 5 5Q7 6.5 9 8.5Q11.5 10 13.9 10Q11 12.5 7 12Q2.5 12 1.8 10Z" fill="#00cc33" stroke="#006600" stroke-width="0.9" /><path d="M3.5 7.5Q4.5 6 6 7.5" fill="none" stroke="#66ee66" stroke-width="1.3" /><path d="M4 5V2" fill="none" stroke="#0033cc" stroke-width="1.8" /><path d="M1 3.2L4 0L7 3.2Z" fill="#0033cc" /></g>
<g transform="translate(48,201)"><path d="M3 3L0.5 0.5H7.5L10 3Z" fill="#ffee77" stroke="#cc6600" stroke-width="1" /><path d="M3 3L0.5 0.5V7.5L3 10Z" fill="#ffcc00" stroke="#cc6600" stroke-width="1" /><path d="M3 3H10V10H3Z" fill="url(#yg)" stroke="#cc6600" stroke-width="1" /><path d="M5.5 5.5L5.5 5.5H12.3L12.3 5.5Z" fill="#ffee77" stroke="#cc6600" stroke-width="1" /><path d="M5.5 5.5L5.5 5.5V11.7L5.5 11.7Z" fill="#ffcc00" stroke="#cc6600" stroke-width="1" /><path d="M5.5 5.5H12.3V11.7H5.5Z" fill="url(#yg)" stroke="#cc6600" stroke-width="1" /><path d="M6.8 6.5H15.5V15.7H6.8Z" fill="url(#og)" stroke="#cc6600" stroke-width="1" /><path d="M7.8 7.5H14.5L7.8 14Z" fill="#ffaa33" /></g>
<g transform="translate(48,224)"><path d="M15.5 0.3A15 15 0 0 1 0.4 15.3V8.5A8.3 8.3 0 0 0 8.7 0.3Z" fill="url(#og)" stroke="#cc6600" stroke-width="1" /><path d="M11.5 2A11 11 0 0 1 2 11.5" fill="none" stroke="#ffdd66" stroke-width="1.6" /><path d="M8.5 3L15 4M7 6.5L12.5 10.5M4.5 8L7.5 14M2.5 8.5L3.5 15" fill="none" stroke="#cc5500" stroke-width="0.8" /></g>
<g transform="translate(48,247)"><path d="M1 3.5Q2.5 0 6 0.5L12 5L9 11L2 6Q0 5 1 3.5Z" fill="url(#yh)" stroke="#cc6600" stroke-width="0.9" /><path d="M3 2.5Q6 2.5 10 6" fill="none" stroke="#ffffaa" stroke-width="1.5" /><circle cx="9.7" cy="10.5" r="5.3" fill="#c8c8c8" stroke="#777" stroke-width="0.9"/><path d="M6.5 7.5L12.8 13.5M12.8 7.5L6.5 13.5M9.7 6.5V14.5M5.7 10.5H13.7" fill="none" stroke="#111" stroke-width="1.5" /></g>
<g transform="translate(48,270)"><path d="M1.5 5.5L8 8.5L15.5 5V12L8 15.5L1.5 12.5Z" fill="url(#yh)" stroke="#cc6600" stroke-width="1" /><path d="M8 8.5V15.5" fill="none" stroke="#cc6600" stroke-width="0.9" /><path d="M1.5 5.5L8.5 3L15.5 5L8 8.5Z" fill="#ffee66" stroke="#cc6600" stroke-width="0.8" /><path d="M2 1.5L8 0.3L11 2L14.5 1L11.5 4.5L8.5 3L5 4.5Z" fill="#ff9900" stroke="#dd5500" stroke-width="0.8" /><path d="M9 10L14.5 7.5V11L9 14Z" fill="#ffaa22" /></g>
<g transform="translate(48,293)"><path d="M0.5 2Q0.5 0.5 2 0.5H5.5L8 5L10.5 0.5H14Q15.5 0.5 15.5 2L13.8 7V15.5H2.4V7Z" fill="url(#yh)" stroke="#cc6600" stroke-width="1" /><path d="M2.2 2.5L4 7.5V14" fill="none" stroke="#ffffaa" stroke-width="1.5" /><path d="M8 5V15.5" fill="none" stroke="#ee3300" stroke-width="1.3" stroke-dasharray="1.3 1"/><rect x="7" y="6.5" width="2" height="2" fill="#fff" stroke="#cc6600" stroke-width="0.5"/></g>
<g transform="translate(48,316)"><path d="M0.5 5.5L3.5 3L6.5 5L10 1.5L15 6L11.5 10L8.5 8L6 12.5Z" fill="#d8dde6" stroke="#999999" stroke-width="0.9" /><path d="M1.5 5.5L3.5 4M7.5 5L10 3" fill="none" stroke="#fff" stroke-width="1.6" /><path d="M4 8L6.5 10" fill="none" stroke="#ccffff" stroke-width="1" /><path d="M10 9L14.5 13.5" fill="none" stroke="#999999" stroke-width="1.6" /><path d="M15.8 10.5V15H11.5Z" fill="#999999" /></g>
<g transform="translate(48,339)"><path d="M0.5 5.5L3.5 3L6.5 5L10 1.5L15 6L11.5 10L8.5 8L6 12.5Z" fill="#d8dde6" stroke="#999999" stroke-width="0.9" /><path d="M1.5 5.5L3.5 4M7.5 5L10 3" fill="none" stroke="#fff" stroke-width="1.6" /><path d="M4 8L6.5 10" fill="none" stroke="#ccffff" stroke-width="1" /><path d="M5 12L7 15" fill="none" stroke="#999999" stroke-width="1" /></g>
<g transform="translate(48,362)"><path d="M0.5 8L4 3.5L7.5 6.5V12.5L6 15Z" fill="#d8dde6" stroke="#999999" stroke-width="0.9" /><path d="M8.5 4.5L11.5 1.5L15.5 5.5L12 10L9.5 8Z" fill="#d8dde6" stroke="#999999" stroke-width="0.9" /><path d="M2 7.5L6 12.5M10 4.5L11.5 3" fill="none" stroke="#fff" stroke-width="1.8" /><path d="M9.5 8L8.5 11L12 10" fill="none" stroke="#999999" stroke-width="0.8" /></g>
<g transform="translate(48,385)"><path d="M0.4 6.5L4.7 10.1V15.7L0.4 11.7Z" fill="#ffee55" stroke="#cc6600" stroke-width="1" /><path d="M7.9 0.6H11.9L15.4 4.5L12 4Z" fill="#ffee66" stroke="#cc6600" stroke-width="1" /><path d="M4.7 15.7V10.1Q6 5 12 4L15.4 4.5V15.7Z" fill="url(#yg)" stroke="#cc6600" stroke-width="1" /><path d="M0.4 6.5Q1.5 1.5 7.9 0.6L12 4Q6 5 4.7 10.1Z" fill="#00cc33" stroke="#006600" stroke-width="0.8" /><path d="M2 6Q3.5 3 8 2" fill="none" stroke="#66ee66" stroke-width="1.3" /></g>
<rect x="47" y="408" width="34" height="1" fill="#cccc99"/>
<g transform="translate(48,416)"><path d="M1.6 8.5L6.4 3.5L11.3 8.5L6.4 13.5Z" fill="#ffdd22" stroke="#aa7700" stroke-width="1" /><path d="M5 10L8 7" fill="none" stroke="#006600" stroke-width="1.6" /><path d="M0 2L2.5 4.5M9.5 12.5L12 15" fill="none" stroke="#007700" stroke-width="1.3" /><path d="M12.7 0V7M9.2 3.5H16.2M10.2 1L15.2 6M15.2 1L10.2 6" fill="none" stroke="#007700" stroke-width="1" /><path d="M3.5 8L6.4 5" fill="none" stroke="#ffff99" stroke-width="1" /></g>
<g transform="translate(48,439)"><path d="M0.8 1.5Q4.5 0.5 5.8 3Q7 6.5 3.5 9Q0.5 11.5 2.5 14Q5 16 8.5 13.5Q11.5 11 11.5 6.5Q12 2.5 15.5 1.2" fill="none" stroke="#009933" stroke-width="2.2" /><path d="M13 3Q12 6 12 9" fill="none" stroke="#005522" stroke-width="0.9" /></g>
<path d="M71 423h5l-2.5 3z" fill="#222255"/>
<path d="M71 446h5l-2.5 3z" fill="#222255"/>
<g transform="translate(48,483)"><path d="M0.3 0.6L6.5 6.8V14.5L0.3 8.1Z" fill="#e4e4e4" stroke="#333" stroke-width="0.8" /><path d="M9.1 0.6L15.7 6.8V12.1L9.1 6.8Z" fill="#e4e4e4" stroke="#333" stroke-width="0.8" /><path d="M1.5 3.5L5.5 7.5V9L1.5 5Z" fill="#ffffff" /><path d="M10.3 3L14.5 7V8L10.3 4Z" fill="#ffffff" /><path d="M2 5.5L5.5 9V11L2 7.5Z" fill="#aaaaaa" /><path d="M10.5 4.8L14.5 8.5V10L10.5 6.3Z" fill="#aaaaaa" /><path d="M0.3 8.1L6.5 14.5L5.5 15.3L0 9.5Z" fill="#ff9900" stroke="#cc5500" stroke-width="0.6" /><path d="M7.8 9.1L10.2 7.1L15.2 11.5L12.8 14.5Z" fill="#ff9900" stroke="#cc5500" stroke-width="0.7" /><path d="M10.2 7.1L12 8.7L9.5 11L7.8 9.1Z" fill="#ffaa22" /><path d="M7 11L11.5 14.8H7.5Z" fill="#ffffff" stroke="#223366" stroke-width="0.7" /></g>
<g transform="translate(48,506)"><path d="M2.5 1V6.5M0.5 3L2.5 0.3L4.5 3" fill="none" stroke="#999999" stroke-width="1.3" /><path d="M3 4.5L5.5 2.5H9V8L16 8.5V12L10.5 15.5H5.5L3 13Z" fill="#c6c6c6" stroke="#999999" stroke-width="1" /><path d="M3 4.5L5.5 6.5V15.5M5.5 6.5L9 4M5.5 10L9 8L10.5 11.5L16 8.5M10.5 11.5V15.5" fill="none" stroke="#999999" stroke-width="0.9" /><path d="M6.5 13.5L9 12.5" fill="none" stroke="#ffffff" stroke-width="1.4" /><path d="M4 7.5V12" fill="none" stroke="#ccccff" stroke-width="1.2" /></g>
<g transform="translate(48,529)"><path d="M0.5 0.5H16V8L13 10.5L10 16H7V8Z" fill="#c6c6c6" /><path d="M0.5 8H7V16H0.5Z" fill="#c6c6c6" /><path d="M0.5 0.5H16M0.5 0.5L7 8M16 0.5L7 8V16M0.5 8V16H7" fill="none" stroke="#999999" stroke-width="1.1" /><path d="M12 2.5H15.5V6.5Z" fill="#9999cc" /><path d="M2.5 3L5 6" fill="none" stroke="#ffffff" stroke-width="1.5" /><path d="M9 12L13 8.5" fill="none" stroke="#ccccff" stroke-width="1.5" /></g>
<g transform="translate(48,552)"><path d="M7 2A6 6 0 0 0 7 14V10A2 2 0 0 1 7 6Z" fill="#c6c6c6" stroke="#999999" stroke-width="1" /><path d="M8 2H12V7H8ZM7 8.5H16V14H7Z" fill="#c6c6c6" stroke="#999999" stroke-width="1" /><path d="M10 8.5V14" fill="none" stroke="#999999" stroke-width="0.9" /><path d="M8.5 11.5H9.5M8.5 4.5H9.5" fill="none" stroke="#ccffff" stroke-width="1" /></g>
<g transform="translate(48,575)"><path d="M4 1H11V4.5L7.5 8.5L4 4.5Z" fill="#c6c6c6" stroke="#999999" stroke-width="1" /><path d="M6 5.5L7.5 7.5L9 5.5Z" fill="#ffffff" /><path d="M1.5 10.5Q7.5 17 14 10.5" fill="none" stroke="#999999" stroke-width="1.3" /><path d="M0.5 11.5L2.5 9L4.5 11M11 11L13 9L15.5 11.5" fill="none" stroke="#999999" stroke-width="1.2" /><path d="M3 12.5L5 13.5M10.5 13.5L12.5 12.5" fill="none" stroke="#ffffff" stroke-width="1.2" /></g>
<g transform="translate(48,598)"><path d="M0.5 6H9.5V0.5H16V15.5H0.5Z" fill="#c6c6c6" /><path d="M9.5 0.5H16V15.5H0.5V9.5M9.5 0.5V15.5M0.5 9.5H16M9.5 7.5H16" fill="none" stroke="#999999" stroke-width="1" /><path d="M1.5 14L5 10.5" fill="none" stroke="#ffffff" stroke-width="1.6" /><path d="M10.5 5L14 1.5" fill="none" stroke="#ccccff" stroke-width="1.3" /><path d="M11 14L13 12" fill="none" stroke="#ccffff" stroke-width="1.1" /></g>
<g transform="translate(48,621)"><path d="M0.5 10L6 9.5L11 2H16M2 13H7L12 6H16" fill="none" stroke="#999999" stroke-width="1.2" /><path d="M0.5 10L6 9.5L7 13H2Z" fill="#ffffff" stroke="#999999" stroke-width="0.8" /><path d="M6 9.5L11 2L12 6L7 13Z" fill="#c6c6c6" stroke="#999999" stroke-width="0.8" /></g>
<g transform="translate(48,644)"><path d="M2 4.5L4.5 1.5H11L12.5 4V11H16V15.5H4L1.5 12.5V6Z" fill="#c6c6c6" stroke="#999999" stroke-width="1.1" /><path d="M2 4.5L4.5 6.5H12.5M4.5 6.5V11M4 11H12.5M4 11V15.5" fill="none" stroke="#999999" stroke-width="0.9" /><path d="M5.5 5L9 2.5" fill="none" stroke="#ccccff" stroke-width="1.3" /><path d="M7 14L10 12.5" fill="none" stroke="#ffffff" stroke-width="1.4" /></g>
<g transform="translate(48,667)"><path d="M6 2L1.5 16H15L10.5 2Z" fill="url(#og)" stroke="#cc6600" stroke-width="0.9" /><path d="M7 4L4 15.5" fill="none" stroke="#ffcc66" stroke-width="1.6" /><path d="M7.3 2.5H9.7V16H7.3Z" fill="#ffffff" /><path d="M8.5 2.5V16" fill="none" stroke="#222222" stroke-width="1.1" /><ellipse cx="8.5" cy="2.2" rx="2.6" ry="1.7" fill="#ffffff" stroke="#555555" stroke-width="0.9"/></g>
<g transform="translate(92,17)"><path d="M8.5 1H1.5V9.5Q1.5 15 7.5 15H16" fill="none" stroke="#000099" stroke-width="1.8" /><path d="M2 10.5L4 8L13.5 2.5L15.5 4.5L6 10Z" fill="#ffcc33" stroke="#775500" stroke-width="0.8" /><path d="M13 3L15 5" fill="none" stroke="#ee6666" stroke-width="2" /><path d="M2 10.5L4.5 9.8L3.5 8.7Z" fill="#333" /><path d="M5 8.5L13 4" fill="none" stroke="#ffee99" stroke-width="1" /></g>
<g transform="translate(92,40)"><text x="-0.3" y="6.6" style="font-size:8.5px" fill="#aa2200" stroke="#aa2200" stroke-width="0.25">3D</text><path d="M6.5 9H1.5V14.5H8" fill="none" stroke="#0000cc" stroke-width="1.8" /><g transform="translate(0,1)"><path d="M2 10.5L4 8L13.5 2.5L15.5 4.5L6 10Z" fill="#ffcc33" stroke="#775500" stroke-width="0.8" /><path d="M13 3L15 5" fill="none" stroke="#ee6666" stroke-width="2" /><path d="M2 10.5L4.5 9.8L3.5 8.7Z" fill="#333" /><path d="M5 8.5L13 4" fill="none" stroke="#ffee99" stroke-width="1" /></g><path d="M11.5 11V14.5L9.5 16M11.5 14.5H15" fill="none" stroke="#009900" stroke-width="1.1" /><path d="M11.5 14.5H15" fill="none" stroke="#cc0000" stroke-width="1.1" /></g>
<g transform="translate(92,63)"><path d="M1.5 9L11 3L14.5 8L5 14.5Z" fill="none" stroke="#0033cc" stroke-width="0" /><path d="M2 7.5L11.5 2M1 6L5.5 13.5M10.5 0.5L15 8" fill="none" stroke="#0033cc" stroke-width="1.6" /><path d="M4 4L2 7.5L6 7M9.5 1L12 2L10 5" fill="none" stroke="#0033cc" stroke-width="1.2" /><path d="M5.5 13.5L15 8" fill="none" stroke="#111" stroke-width="2" /></g>
<g transform="translate(92,86)"><path d="M0.5 0.5L10 10" fill="none" stroke="#000099" stroke-width="1.8" /><path d="M9.5 9.5L16 16" fill="none" stroke="#111122" stroke-width="1.8" /></g>
<g transform="translate(92,109)"><path d="M1.5 2.5H15V14H1.5Z" fill="none" stroke="#000099" stroke-width="1.8" /><rect x="14" y="1" width="2" height="2" fill="#fff" stroke="#cc0000" stroke-width="1" class="cr"/><rect x="1" y="13" width="2" height="2" fill="#fff" stroke="#cc0000" stroke-width="1" class="cr"/></g>
<g transform="translate(92,132)"><circle cx="8" cy="8.5" r="6.5" fill="none" stroke="#000099" stroke-width="1.6"/><path d="M8 9L12.5 4.5" fill="none" stroke="#222" stroke-width="1" /><rect x="7" y="9" width="2" height="2" fill="#fff" stroke="#cc0000" stroke-width="1" class="cr"/><rect x="12" y="3" width="2" height="2" fill="#fff" stroke="#cc0000" stroke-width="1" class="cr"/></g>
<g transform="translate(92,155)"><ellipse cx="8" cy="8" rx="8" ry="4" transform="rotate(-38 8 8)" fill="none" stroke="#000099" stroke-width="1.6"/><path d="M7 7L9.5 9.5M9.5 7L7 9.5" fill="none" stroke="#333" stroke-width="0.8" /></g>
<g transform="translate(92,178)"><path d="M4.5 2H11.5L15 8L11.5 14H4.5L1 8Z" fill="none" stroke="#000099" stroke-width="1.6" /><path d="M8 5.5V10.5M5.5 8H10.5" fill="none" stroke="#222" stroke-width="1.1" /></g>
<g transform="translate(92,201)"><path d="M2.5 3.5Q8 -1.5 13.5 6.5" fill="none" stroke="#000099" stroke-width="1.6" /><circle cx="8" cy="8" r="6.5" fill="none" stroke="#222" stroke-width="1.3" stroke-dasharray="1.3 3.2"/><rect x="1" y="2" width="2" height="2" fill="#fff" stroke="#cc0000" stroke-width="1" class="cr"/><rect x="7" y="7" width="2" height="2" fill="#fff" stroke="#cc0000" stroke-width="1" class="cr"/><rect x="13" y="5" width="2" height="2" fill="#fff" stroke="#cc0000" stroke-width="1" class="cr"/></g>
<g transform="translate(92,224)"><path d="M8 2A6.5 6.5 0 0 1 8 15" fill="none" stroke="#000099" stroke-width="1.6" /><path d="M0.5 1.5H8" fill="none" stroke="#222" stroke-width="1.6" /><path d="M8 6V11M5.5 8.5H10.5" fill="none" stroke="#222" stroke-width="1" /><rect x="7" y="1" width="2" height="2" fill="#fff" stroke="#cc0000" stroke-width="1" class="cr"/><rect x="7" y="14" width="2" height="2" fill="#fff" stroke="#cc0000" stroke-width="1" class="cr"/></g>
<g transform="translate(92,247)"><path d="M1.5 11.5A6.5 7 0 0 1 14.5 11.5" fill="none" stroke="#000099" stroke-width="1.6" /><path d="M8 9V14M5.5 11.5H10.5" fill="none" stroke="#222" stroke-width="1" /><rect x="1" y="11" width="2" height="2" fill="#fff" stroke="#cc0000" stroke-width="1" class="cr"/><rect x="13" y="11" width="2" height="2" fill="#fff" stroke="#cc0000" stroke-width="1" class="cr"/><rect x="7" y="3" width="2" height="2" fill="#fff" stroke="#cc0000" stroke-width="1" class="cr"/></g>
<g transform="translate(92,270)"><path d="M0.5 2H8Q14.5 2 14.5 9V16" fill="none" stroke="#aaaaaa" stroke-width="1.8" /><path d="M5.5 7.5V12.5M3 10H8" fill="none" stroke="#aaaaaa" stroke-width="1" /></g>
<g transform="translate(92,293)"><path d="M8 0V16" fill="none" stroke="#000099" stroke-width="1.8" stroke-dasharray="5 2 1.5 2"/></g>
<g transform="translate(92,316)"><path d="M1.5 15Q1.5 3 5.5 3Q8 3 9 7Q10.5 11.5 13 10Q15 9 15 0.5" fill="none" stroke="#000099" stroke-width="2" /></g>
<g transform="translate(92,339)"><path d="M1 15Q5 11 8 8Q11 4 15.5 1.5" fill="none" stroke="#999999" stroke-width="1.6" /><circle cx="8.5" cy="8" r="2" fill="#999999"/></g>
<g transform="translate(92,362)"><path d="M8 3.5V12.5M3.5 8H12.5M5 5L11 11M11 5L5 11" fill="none" stroke="#0000cc" stroke-width="1.1" /></g>
<g transform="translate(92,385)"><path d="M1.5 1.5L15.5 3.5L15 15.5L1 13Z M8.5 2.5L8 14.5 M1.3 7.5L15.3 9.5" fill="none" stroke="#0033cc" stroke-width="1.2" stroke-dasharray="2.5 1.5"/></g>
<rect x="91" y="408" width="34" height="1" fill="#cccc99"/>
<g transform="translate(92,416)"><path d="M8.2 0V14M8.2 10H13V14" fill="none" stroke="#999999" stroke-width="1.8" /><path d="M0 15H16.2" fill="none" stroke="#999999" stroke-width="2" /></g>
<g transform="translate(92,439)"><path d="M0 15H16.2" fill="none" stroke="#999999" stroke-width="2" /><path d="M8.2 0V14" fill="none" stroke="#999999" stroke-width="1.8" /><circle cx="3.8" cy="9" r="2.6" fill="#ddeeff" stroke="#999999" stroke-width="1.1"/><circle cx="9" cy="9.3" r="2.4" fill="#ddeeff" stroke="#999999" stroke-width="1.1"/><path d="M2.5 6.8Q3 3.5 5 3.5M10.5 7.5Q12 5 13.5 4.7" fill="none" stroke="#999999" stroke-width="1.2" /></g>
<g transform="translate(92,462)"><path d="M16.5 1.4H1.7V16.7" fill="none" stroke="#999999" stroke-width="2" /><circle cx="10.2" cy="10" r="5.4" fill="none" stroke="#999999" stroke-width="1"/><circle cx="10.2" cy="10" r="1.7" fill="#999999"/></g>
<rect x="91" y="485" width="34" height="1" fill="#cccc99"/>
<g transform="translate(92,493)"><path d="M8 0.5Q10 1.5 11 6L15.3 12.8H0.5L5 6Q6 1.5 8 0.5Z" fill="none" stroke="#999999" stroke-width="1.8" /><path d="M8 4.5V11.5" fill="none" stroke="#999999" stroke-width="1.6" stroke-dasharray="2 1.5"/><path d="M6.5 14.3H9.5" fill="none" stroke="#999999" stroke-width="1.2" /></g>
<g transform="translate(92,516)"><path d="M0.4 0.4H10.5L15.6 4.2V15.6H5.7L0.4 11.5Z" fill="#d4d4ee" stroke="#999999" stroke-width="1" /><path d="M0.4 0.4L5.7 4.2H15.6M5.7 4.2V15.6" fill="none" stroke="#999999" stroke-width="1" /><path d="M6.7 5.2H14.6V14.6H6.7Z" fill="#ccccff" /><path d="M15.6 4.2V15.6H5.7" fill="none" stroke="#669999" stroke-width="1" /></g>
<g transform="translate(92,539)"><path d="M0.4 1.2H15V12.5" fill="none" stroke="#999999" stroke-width="2" /><path d="M0.4 5.7H11L4 14.3" fill="none" stroke="#999999" stroke-width="2" /></g>
<g transform="translate(92,562)"><path d="M9.5 0V16M0 6.8H16M0.4 11.8H15.7" fill="none" stroke="#999999" stroke-width="1.8" /><path d="M2.5 1L8 6M14.5 1.5L11 6" fill="none" stroke="#999999" stroke-width="1.5" /><circle cx="2" cy="2.2" r="1.5" fill="none" stroke="#999999" stroke-width="1"/><circle cx="2" cy="4.8" r="1.3" fill="none" stroke="#999999" stroke-width="1"/></g>
<g transform="translate(92,585)"><path d="M0.4 1H15.7" fill="none" stroke="#999999" stroke-width="2" /><path d="M8 2V16" fill="none" stroke="#999999" stroke-width="1.8" stroke-dasharray="3.5 1.5"/></g>
<g transform="translate(92,608)"><path d="M0.8 0V15.5" fill="none" stroke="#999999" stroke-width="1.8" /><path d="M14.8 0V15.5" fill="none" stroke="#999999" stroke-width="1.8" stroke-dasharray="2.5 1"/><path d="M3.5 4.2H12M3.5 11.8H12" fill="none" stroke="#999999" stroke-width="1.8" /><path d="M9.5 1.5L12.5 4.2L9.5 7M6 9L3 11.8L6 14.5" fill="none" stroke="#999999" stroke-width="1.6" /></g>
<g transform="translate(92,631)"><rect x="0.5" y="0.5" width="1.5" height="1.5" fill="#999999"/><rect x="0.5" y="3.2" width="1.5" height="1.5" fill="#999999"/><rect x="0.5" y="5.9" width="1.5" height="1.5" fill="#999999"/><rect x="3.2" y="0.5" width="1.5" height="1.5" fill="#999999"/><rect x="3.2" y="3.2" width="1.5" height="1.5" fill="#999999"/><rect x="3.2" y="5.9" width="1.5" height="1.5" fill="#999999"/><rect x="5.9" y="0.5" width="1.5" height="1.5" fill="#999999"/><rect x="5.9" y="3.2" width="1.5" height="1.5" fill="#999999"/><path d="M4 7L8 11.5" fill="none" stroke="#999999" stroke-width="1.6" /><path d="M8.5 8V12H4.5" fill="none" stroke="#999999" stroke-width="1.5" /><path d="M9.7 10H14.6V14.7H9.7Z" fill="none" stroke="#999999" stroke-width="2" /></g>
<g transform="translate(92,654)"><rect x="0.5" y="0.5" width="1.5" height="1.5" fill="#999999"/><rect x="0.5" y="3.2" width="1.5" height="1.5" fill="#999999"/><rect x="0.5" y="5.9" width="1.5" height="1.5" fill="#999999"/><rect x="3.2" y="0.5" width="1.5" height="1.5" fill="#999999"/><rect x="3.2" y="3.2" width="1.5" height="1.5" fill="#999999"/><rect x="3.2" y="5.9" width="1.5" height="1.5" fill="#999999"/><rect x="5.9" y="0.5" width="1.5" height="1.5" fill="#999999"/><rect x="5.9" y="3.2" width="1.5" height="1.5" fill="#999999"/><path d="M10.5 2Q13.5 0.5 14.5 4.5" fill="none" stroke="#999999" stroke-width="1.5" /><path d="M12.5 4L14.8 6L16 3" fill="none" stroke="#999999" stroke-width="1.3" /><path d="M9.5 4.3L14.5 9.3L9.5 14.3L4.5 9.3Z" fill="none" stroke="#999999" stroke-width="2" /></g>
<g transform="translate(92,677)"><path d="M0.4 0.7H15.7V8H0.4Z" fill="#ccccff" stroke="#999999" stroke-width="2" /><path d="M1 1V8" fill="none" stroke="#6666cc" stroke-width="1.2" /></g>
</g>
<g id="panel" clip-path="url(#cpanel)">
<rect x="127" y="1" width="186" height="682" fill="#ccccff" />
<rect x="127" y="1" width="1" height="682" fill="#ddddff" />
<rect x="154" y="27" width="160" height="1" fill="#666699" /><rect x="136" y="29" width="180" height="1" fill="#ffffff" />
<path d="M127.5 29V11Q127.5 6.5 132 6.5H149.5Q154 6.5 154 11V27" fill="none" stroke="#aaaacc" stroke-width="1"/>
<path d="M129 30V11.5Q129 8 133 8H148.5Q152.5 8 152.5 11.5V28" fill="#ccccff" stroke="#ffffff" stroke-width="2"/>
<rect x="130" y="9" width="21.5" height="4" fill="url(#tabhl)"/>
<path d="M128.5 29.5Q127.5 29.5 129 33" fill="none" stroke="#ffffff" stroke-width="2"/>
<path d="M156.5 27V11Q156.5 6.5 161 6.5H176.5Q181.5 6.5 181.5 11V27Z" fill="#cccccc" stroke="#8080c0" stroke-width="1.2"/>
<path d="M157.5 17L170 19.5L180.5 26.5H157.5Z" fill="#99cccc"/>
<path d="M161 6.5H176.5" stroke="#aaaaaa" stroke-width="1"/>
<path d="M184.5 27V11Q184.5 6.5 189 6.5H204.5Q209.5 6.5 209.5 11V27Z" fill="#cccccc" stroke="#8080c0" stroke-width="1.2"/>
<path d="M185.5 17L198 19.5L208.5 26.5H185.5Z" fill="#99cccc"/>
<path d="M189 6.5H204.5" stroke="#aaaaaa" stroke-width="1"/>
<path d="M212.5 27V11Q212.5 6.5 217 6.5H232.5Q237.5 6.5 237.5 11V27Z" fill="#cccccc" stroke="#8080c0" stroke-width="1.2"/>
<path d="M213.5 17L226 19.5L236.5 26.5H213.5Z" fill="#99cccc"/>
<path d="M217 6.5H232.5" stroke="#aaaaaa" stroke-width="1"/>
<path d="M240.5 27V11Q240.5 6.5 245 6.5H260.5Q265.5 6.5 265.5 11V27Z" fill="#cccccc" stroke="#8080c0" stroke-width="1.2"/>
<path d="M241.5 17L254 19.5L264.5 26.5H241.5Z" fill="#99cccc"/>
<path d="M245 6.5H260.5" stroke="#aaaaaa" stroke-width="1"/>
<g transform="translate(131,8)"><path d="M1.2 2.9L4 1.6L6 3V2.2L8.9 1.2L12.7 3.1L12.2 7L16.6 9.9L16.8 13.2L10.5 16.6L1.9 7.9Z" fill="#ffdd00" stroke="#000" stroke-width="1.5" stroke-linejoin="round"/><path d="M1.5 3.2L10.2 12L10.5 16.3L2 7.8Z" fill="#ffee44"/><path d="M10.2 12L16.4 10L16.6 13L10.6 16.2Z" fill="#cc9900"/><path d="M6.2 3.5L9 2L12 3.5L11.8 7L9 8.5L6.8 7Z" fill="#eebb00"/><path d="M1.2 2.9L10.2 12L16.6 9.9M10.2 12L10.5 16.6M6 3L6.8 7.5L9 9L12.2 7M9 9L8.8 5" fill="none" stroke="#000" stroke-width="1"/></g>
<g transform="translate(160,9)"><rect x="1.5" y="4.5" width="11" height="12" fill="#eeffff" stroke="#000" stroke-width="1.2"/><path class="cr" d="M3 8.5H11M3 10.5H11M3 12.5H11M3 14.5H11" stroke="#3399ff" stroke-width="1"/><path d="M5 5L9.5 0.5H14.5L15.5 3L12 6L9 4.5L6 6.5Z" fill="#ddaa66" stroke="#774411" stroke-width="0.8"/></g>
<g transform="translate(188,8)"><path d="M2.5 0V18M5 0V18" stroke="#555" stroke-width="1"/><path d="M5 5.5H9M5 13.5H12" stroke="#555" stroke-width="1"/><rect x="8.5" y="2.5" width="6" height="6" rx="1" fill="#ffdd00" stroke="#000" stroke-width="1"/><rect x="11.5" y="10.5" width="6" height="6" rx="1" fill="#ffdd00" stroke="#000" stroke-width="1"/></g>
<g transform="translate(215,8)" fill="none" stroke="#cc44dd" stroke-width="1.6"><circle cx="9" cy="9" r="5"/><path d="M9 0.5V17.5M0.5 9H17.5" stroke-width="1.4"/></g>
<g transform="translate(244,9)"><rect x="0.5" y="0.5" width="13" height="13" fill="#6699ff" stroke="#000" stroke-width="1.2"/><rect x="1.2" y="1.2" width="11.6" height="4" fill="#99ccff"/><path d="M1.2 12.8L6 6.5L9 12.8Z" fill="#009933"/><circle cx="9.5" cy="3" r="1.8" fill="#ff9900"/><path d="M9.5 0.3V1.2M7 3H7.8M11.2 3H12" stroke="#ff9900" stroke-width="0.9"/><circle cx="11.3" cy="11" r="4.6" fill="#dddddd"/><path d="M11.3 11L11.3 6.4A4.6 4.6 0 0 1 15.7 9.6Z" fill="#dd2222"/><path d="M11.3 11L15.7 9.6A4.6 4.6 0 0 1 12.1 15.5Z" fill="#ffaa22"/><path d="M11.3 11L12.1 15.5A4.6 4.6 0 0 1 6.9 12.4Z" fill="#22bb22"/><path d="M11.3 11L6.9 12.4A4.6 4.6 0 0 1 11.3 6.4Z" fill="#3366ee"/><circle cx="10.5" cy="9.5" r="1.2" fill="#ffffff" opacity="0.6"/></g>
<path d="M300.5 13.2L303.8 16.5L300.5 19.8M305 13.2L308.3 16.5L305 19.8" fill="none" stroke="#555555" stroke-width="1.3"/>
<path d="M136.5 30.5H308Q312.5 31.5 312.5 36.5V41Q312.5 45.5 308 46.5H136.5A8 8 0 0 1 136.5 30.5Z" fill="url(#fbox)" stroke="#888888" stroke-width="1"/>
<path d="M130 43Q133 46.5 138 46.5H308" fill="none" stroke="#bbbbbb" stroke-width="1"/><path d="M133 46.5Q135 47.5 138 47.5H308Q312 47 313 43" fill="none" stroke="#ffffff" stroke-width="1"/>
<path d="M136.5 33.5H146.5V35L143.5 38.5V43.5H139.5V38.5L136.5 35Z" fill="#3399ff" stroke="#000099" stroke-width="1"/><path d="M138.5 35L141 38.5V42.5" fill="none" stroke="#ccffff" stroke-width="1.2"/>
<g transform="translate(128.5,49.5)"><path d="M1.2 2.9L4 1.6L6 3V2.2L8.9 1.2L12.7 3.1L12.2 7L16.6 9.9L16.8 13.2L10.5 16.6L1.9 7.9Z" fill="#ffdd00" stroke="#000" stroke-width="1.5" stroke-linejoin="round"/><path d="M1.5 3.2L10.2 12L10.5 16.3L2 7.8Z" fill="#ffee44"/><path d="M10.2 12L16.4 10L16.6 13L10.6 16.2Z" fill="#cc9900"/><path d="M6.2 3.5L9 2L12 3.5L11.8 7L9 8.5L6.8 7Z" fill="#eebb00"/><path d="M1.2 2.9L10.2 12L16.6 9.9M10.2 12L10.5 16.6M6 3L6.8 7.5L9 9L12.2 7M9 9L8.8 5" fill="none" stroke="#000" stroke-width="1"/></g>
<text y="62.7"><tspan x="150">零</tspan><tspan x="162">件</tspan><tspan x="173.94" style="font-size:11px">1</tspan><tspan x="186.17" style="font-size:11px">(</tspan><tspan x="190">默</tspan><tspan x="202">认</tspan><tspan x="214.79" style="font-size:11px">&lt;</tspan><tspan x="222.79" style="font-size:11px">&lt;</tspan><tspan x="230">默</tspan><tspan x="242">认</tspan><tspan x="254.79" style="font-size:11px">&gt;</tspan><tspan x="261.94" style="font-size:11px">_</tspan><tspan x="268">显</tspan><tspan x="280">示</tspan><tspan x="292">状</tspan><tspan x="304">态</tspan></text>
<path d="M137.5 67V275" stroke="#888" stroke-width="1" stroke-dasharray="1 1" class="cr"/>
<path d="M143 78.5H148" stroke="#888" stroke-width="1" stroke-dasharray="1 1" class="cr"/>
<rect x="133" y="74" width="9" height="9" fill="#ffffff" /><path d="M135.5 75.5V81.5L140 78.5Z" fill="#fff" stroke="#999" stroke-width="1"/>
<g transform="translate(148,69)"><path d="M0.6 14.4V1.5Q0.6 0.6 1.5 0.6H6L7.5 2.6H15.4V14.4Z" fill="url(#fold)" stroke="#cc6600" stroke-width="1.2"/><text x="8.3" y="13" text-anchor="middle" style="font-family:'Liberation Serif',serif;font-size:12px;font-weight:bold" fill="#1133dd">A</text></g>
<text y="81.6"><tspan x="169">注</tspan><tspan x="181">解</tspan></text>
<path d="M139 96.5H148" stroke="#888" stroke-width="1" stroke-dasharray="1 1" class="cr"/>
<g transform="translate(148,87)"><path d="M0.6 14.4V1.5Q0.6 0.6 1.5 0.6H6L7.5 2.6H15.4V14.4Z" fill="url(#fold)" stroke="#cc6600" stroke-width="1.2"/><circle cx="8.5" cy="8.5" r="4.2" fill="#ffffff" stroke="#333333" stroke-width="1"/><path d="M6.5 10.5L10.5 6" stroke="#2255dd" stroke-width="1.5"/><path d="M8.5 5v1M8.5 11v1M5 8.5h1M11 8.5h1" stroke="#555" stroke-width="0.8"/></g>
<text y="99.6"><tspan x="169">传</tspan><tspan x="181">感</tspan><tspan x="193">器</tspan></text>
<path d="M143 114.5H148" stroke="#888" stroke-width="1" stroke-dasharray="1 1" class="cr"/>
<rect x="133" y="110" width="9" height="9" fill="#ffffff" /><path d="M135.5 111.5V117.5L140 114.5Z" fill="#fff" stroke="#999" stroke-width="1"/>
<g transform="translate(148,105)"><path d="M0.6 14.4V1.5Q0.6 0.6 1.5 0.6H6L7.5 2.6H15.4V14.4Z" fill="url(#fold)" stroke="#cc6600" stroke-width="1.2"/><rect x="4.5" y="5.5" width="6" height="6" fill="#ffcc33" stroke="#000" stroke-width="1.3" rx="1.3"/><rect x="6.3" y="7.3" width="5.4" height="5.4" fill="#ffcc22" stroke="#000" stroke-width="1.3" rx="1.3"/></g>
<text y="117.6"><tspan x="169">实</tspan><tspan x="181">体</tspan><tspan x="193.17" style="font-size:11px">(</tspan><tspan x="196.94" style="font-size:11px">1</tspan><tspan x="203.17" style="font-size:11px">)</tspan></text>
<path d="M139 132.5H148" stroke="#888" stroke-width="1" stroke-dasharray="1 1" class="cr"/>
<g transform="translate(148,123)"><path d="M0.6 14.4V1.5Q0.6 0.6 1.5 0.6H6L7.5 2.6H15.4V14.4Z" fill="url(#fold)" stroke="#cc6600" stroke-width="1.2"/><path d="M3.5 9.5L8.5 6.5L12.5 8.5L8 12.5Z" fill="#ff9900" stroke="#663300" stroke-width="1"/><path d="M6 9.5L9 8" stroke="#ffcc66" stroke-width="1"/></g>
<text y="135.6"><tspan x="169">曲</tspan><tspan x="181">面</tspan><tspan x="193">实</tspan><tspan x="205">体</tspan></text>
<path d="M139 150.5H148" stroke="#888" stroke-width="1" stroke-dasharray="1 1" class="cr"/>
<g transform="translate(148,141)"><circle cx="2.6" cy="2.6" r="2.6" fill="#dd0022"/><circle cx="2.6" cy="7.6" r="2.6" fill="#2244dd"/><circle cx="2.6" cy="12.6" r="2.6" fill="#00bb22"/><circle cx="1.8" cy="1.8" r="0.9" fill="#ffaaaa"/><circle cx="1.8" cy="6.8" r="0.9" fill="#aabbff"/><circle cx="1.8" cy="11.8" r="0.9" fill="#aaffaa"/><path d="M7 2.6H15M7 7.6H15M7 12.6H15" stroke="#333" stroke-width="1.6"/></g>
<text y="153.6"><tspan x="169">材</tspan><tspan x="181">质</tspan><tspan x="196.79" style="font-size:11px">&lt;</tspan><tspan x="204">未</tspan><tspan x="216">指</tspan><tspan x="228">定</tspan><tspan x="240.79" style="font-size:11px">&gt;</tspan></text>
<path d="M139 168.5H148" stroke="#888" stroke-width="1" stroke-dasharray="1 1" class="cr"/>
<g transform="translate(148,159)" fill="none" stroke="#111" stroke-width="1" class="cr"><path d="M0.5 9L7.5 0.5L15 8L7.5 15Z"/><path d="M0.5 0.5L3 3M12 12.5L14.5 15M5 5.5L10 10.5"/></g>
<text y="171.6"><tspan x="169">前</tspan><tspan x="181">视</tspan><tspan x="193">基</tspan><tspan x="205">准</tspan><tspan x="217">面</tspan></text>
<path d="M139 186.5H148" stroke="#888" stroke-width="1" stroke-dasharray="1 1" class="cr"/>
<g transform="translate(148,177)" fill="none" stroke="#111" stroke-width="1" class="cr"><path d="M0.5 9L7.5 0.5L15 8L7.5 15Z"/><path d="M0.5 0.5L3 3M12 12.5L14.5 15M5 5.5L10 10.5"/></g>
<text y="189.6"><tspan x="169">上</tspan><tspan x="181">视</tspan><tspan x="193">基</tspan><tspan x="205">准</tspan><tspan x="217">面</tspan></text>
<path d="M139 204.5H148" stroke="#888" stroke-width="1" stroke-dasharray="1 1" class="cr"/>
<g transform="translate(148,195)" fill="none" stroke="#111" stroke-width="1" class="cr"><path d="M0.5 9L7.5 0.5L15 8L7.5 15Z"/><path d="M0.5 0.5L3 3M12 12.5L14.5 15M5 5.5L10 10.5"/></g>
<text y="207.6"><tspan x="169">右</tspan><tspan x="181">视</tspan><tspan x="193">基</tspan><tspan x="205">准</tspan><tspan x="217">面</tspan></text>
<path d="M139 222.5H148" stroke="#888" stroke-width="1" stroke-dasharray="1 1" class="cr"/>
<g transform="translate(148,213)" fill="none"><path d="M5.5 2V11.5H12" stroke="#cc0000" stroke-width="1.2"/><path d="M5.5 0L3.4 3.5H7.6Z" fill="#cc0000"/><path d="M14 11.5L10.8 9.5V13.5Z" fill="#cc0000"/><path d="M3.5 9.5L7.5 13.5M7.5 9.5L3.5 13.5M3 11.5H8M5.5 9V14" stroke="#000" stroke-width="0.8"/></g>
<text y="225.6"><tspan x="169">原</tspan><tspan x="181">点</tspan></text>
<path d="M143 240.5H148" stroke="#888" stroke-width="1" stroke-dasharray="1 1" class="cr"/>
<rect x="133" y="236" width="9" height="9" fill="#ffffff" /><path d="M135.5 237.5V243.5L140 240.5Z" fill="#fff" stroke="#999" stroke-width="1"/>
<g transform="translate(148,231)"><path d="M3.5 3.5L0.5 0.5H11.5L14.5 3.5Z" fill="#ffee77" stroke="#552200" stroke-width="1" /><path d="M3.5 3.5L0.5 0.5V11L3.5 14Z" fill="#ffcc00" stroke="#552200" stroke-width="1" /><path d="M3.5 3.5H14.5V14H3.5Z" fill="url(#yg)" stroke="#552200" stroke-width="1" /><path d="M6.2 7.5L7.7 6L11 6.7L15.5 10.7V15.5H10.7L6.2 9.2Z" fill="#00cc33" stroke="#006600" stroke-width="0.8" /><path d="M10.7 10.7H15.5V15.5H10.7Z" fill="#66ee66" stroke="#006600" stroke-width="0.8" /></g>
<text y="243.6"><tspan x="169">凸</tspan><tspan x="181">台</tspan><tspan x="193.17" style="font-size:11px">-</tspan><tspan x="197">拉</tspan><tspan x="209">伸</tspan><tspan x="220.94" style="font-size:11px">1</tspan></text>
<path d="M139 258.5H148" stroke="#888" stroke-width="1" stroke-dasharray="1 1" class="cr"/>
<g transform="translate(148,249)"><path d="M1.5 8L8 2L15 8.5L8.5 14.5Z" fill="#ffdd22" stroke="#886600" stroke-width="1"/><path d="M5.5 10.5L10.5 5.5" stroke="#008800" stroke-width="1.6"/><path d="M0.5 0.5L3.5 3.5M12.5 12.5L15.5 15.5" stroke="#008800" stroke-width="1.2" stroke-dasharray="2 1"/><path d="M3 8L8 3.5" stroke="#ffff99" stroke-width="1"/></g>
<text y="261.6"><tspan x="169">基</tspan><tspan x="181">准</tspan><tspan x="193">面</tspan><tspan x="204.94" style="font-size:11px">1</tspan></text>
<path d="M139 276.5H148" stroke="#888" stroke-width="1" stroke-dasharray="1 1" class="cr"/>
<g transform="translate(148,267)"><path d="M8.5 1H1.5V9.5Q1.5 15 7.5 15H15" fill="none" stroke="#000099" stroke-width="1.8"/><path d="M2 10.5L4 8L13.5 2.5L15.5 4.5L6 10Z" fill="#ffcc33" stroke="#775500" stroke-width="0.8"/><path d="M13 3L15 5" stroke="#ee6666" stroke-width="2"/><path d="M2 10.5L4.5 9.8L3.5 8.7Z" fill="#333"/></g>
<text y="279.6"><tspan x="169.17" style="font-size:11px">(</tspan><tspan x="173.17" style="font-size:11px">-</tspan><tspan x="177.17" style="font-size:11px">)</tspan><tspan x="184">草</tspan><tspan x="196">图</tspan><tspan x="207.94" style="font-size:11px">3</tspan></text>
<rect x="127" y="284" width="186" height="2" fill="#0055cc" /><rect x="127" y="286" width="186" height="1" fill="#6699dd" />
</g>
<rect x="313" y="1" width="1" height="682" fill="#dcdce8" /><rect x="314" y="1" width="1" height="682" fill="#aaaaaa" /><rect x="315" y="1" width="1" height="682" fill="#336666" />
<g id="view" clip-path="url(#cview)">
<rect x="316" y="1" width="515" height="682" fill="#6699cc" />
<rect x="316" y="250" width="300" height="311" fill="#9999cc" />
<rect x="600" y="337" width="231" height="224" fill="#9999cc" />
<polygon points="316,249 339.3,249 316,315" fill="#6699cc"/>
<rect x="316" y="561" width="515" height="122" fill="#99cccc" />
<path class="cr" d="M316 561.5H831" stroke="#9999cc" stroke-width="1" stroke-dasharray="1 1"/><path class="cr" d="M339 249.5H616" stroke="#9999cc" stroke-width="1" stroke-dasharray="1 1"/><path class="cr" d="M600 336.5H831" stroke="#9999cc" stroke-width="1" stroke-dasharray="1 1"/>
<path d="M491.8 181.0L391.6 366.9C389.5 373.2 388.9 378.6 389.6 385.0C390.3 391.4 392.1 398.6 396.0 405.3C399.9 412.1 407.1 420.0 413.3 425.5C419.6 431.0 424.6 434.3 433.5 438.4C442.4 442.5 456.0 446.9 466.6 450.0C477.2 453.1 486.9 455.4 497.0 457.2C507.1 459.0 517.6 460.3 527.2 461.0C536.8 461.7 543.8 461.8 554.6 461.5C565.4 461.2 575.3 461.2 592.0 459.2C608.7 457.2 634.7 454.3 654.8 449.5C674.9 444.7 696.7 437.4 712.8 430.2C728.9 422.9 740.9 414.1 751.4 406.0C761.9 397.9 770.0 389.1 775.6 381.9C781.2 374.7 783.0 368.6 785.2 362.6C787.4 356.6 788.6 351.4 788.6 345.7C788.6 340.0 786.2 332.7 785.2 328.7C784.2 324.7 786.2 326.0 782.8 321.5L643.0 164.0Z" fill="#ffffff"/>
<clipPath id="cbody"><path d="M491.8 181.0L391.6 366.9C389.5 373.2 388.9 378.6 389.6 385.0C390.3 391.4 392.1 398.6 396.0 405.3C399.9 412.1 407.1 420.0 413.3 425.5C419.6 431.0 424.6 434.3 433.5 438.4C442.4 442.5 456.0 446.9 466.6 450.0C477.2 453.1 486.9 455.4 497.0 457.2C507.1 459.0 517.6 460.3 527.2 461.0C536.8 461.7 543.8 461.8 554.6 461.5C565.4 461.2 575.3 461.2 592.0 459.2C608.7 457.2 634.7 454.3 654.8 449.5C674.9 444.7 696.7 437.4 712.8 430.2C728.9 422.9 740.9 414.1 751.4 406.0C761.9 397.9 770.0 389.1 775.6 381.9C781.2 374.7 783.0 368.6 785.2 362.6C787.4 356.6 788.6 351.4 788.6 345.7C788.6 340.0 786.2 332.7 785.2 328.7C784.2 324.7 786.2 326.0 782.8 321.5L643.0 164.0Z"/></clipPath><g clip-path="url(#cbody)">
<polygon points="520.0,180.0 514.0,208.5 486.0,300.0 477.0,330.0 449.0,452.0 380.0,452.0 380.0,360.0 480.0,170.0" fill="#cccccc"/>
<polygon points="514.0,208.5 486.0,300.0 477.0,330.0 449.0,452.0 465.0,458.0 494.8,330.0 521.0,209.5 522.0,190.0" fill="#ffcccc"/>
<polygon points="521.0,209.5 494.8,330.0 465.0,458.0 467.3,458.0 496.6,330.0 522.0,209.5" fill="#ffffcc"/>
<polygon points="640.0,181.0 643.0,160.0 790.0,320.0 795.0,345.0 790.0,365.0 780.0,367.0" fill="#ccccff"/>
</g>
<polygon points="639.9,182.7 643.4,179.2 653.9,193.3 651,198.5" fill="#ffccff"/>
<path class="cr" d="M491.8 181.0L391.6 366.9C389.5 373.2 388.9 378.6 389.6 385.0C390.3 391.4 392.1 398.6 396.0 405.3C399.9 412.1 407.1 420.0 413.3 425.5C419.6 431.0 424.6 434.3 433.5 438.4C442.4 442.5 456.0 446.9 466.6 450.0C477.2 453.1 486.9 455.4 497.0 457.2C507.1 459.0 517.6 460.3 527.2 461.0C536.8 461.7 543.8 461.8 554.6 461.5C565.4 461.2 575.3 461.2 592.0 459.2C608.7 457.2 634.7 454.3 654.8 449.5C674.9 444.7 696.7 437.4 712.8 430.2C728.9 422.9 740.9 414.1 751.4 406.0C761.9 397.9 770.0 389.1 775.6 381.9C781.2 374.7 783.0 368.6 785.2 362.6C787.4 356.6 788.6 351.4 788.6 345.7C788.6 340.0 786.2 332.7 785.2 328.7C784.2 324.7 786.2 326.0 782.8 321.5L643.0 164.0" fill="none" stroke="#000" stroke-width="1"/>
<polygon points="643.7,169.3 643.7,172.5 643.1,175.7 641.9,179.0 640.2,182.2 637.9,185.3 635.1,188.4 631.8,191.4 627.9,194.3 623.6,197.0 618.9,199.6 613.8,202.0 608.4,204.2 602.6,206.1 596.6,207.9 590.3,209.4 583.9,210.7 577.3,211.6 570.7,212.4 564.0,212.8 557.4,213.0 550.8,212.8 544.4,212.4 538.2,211.8 532.2,210.8 526.4,209.6 521.0,208.1 515.9,206.4 511.2,204.5 506.9,202.3 503.1,200.0 499.8,197.4 497.0,194.7 494.7,191.9 493.0,188.9 491.9,185.8 491.3,182.7 491.3,179.5 491.9,176.3 493.1,173.0 494.8,169.8 497.1,166.7 499.9,163.6 503.2,160.6 507.1,157.7 511.4,155.0 516.1,152.4 521.2,150.0 526.6,147.8 532.4,145.9 538.4,144.1 544.7,142.6 551.1,141.3 557.7,140.4 564.3,139.6 571.0,139.2 577.6,139.0 584.2,139.2 590.6,139.6 596.8,140.2 602.8,141.2 608.6,142.4 614.0,143.9 619.1,145.6 623.8,147.5 628.1,149.7 631.9,152.0 635.2,154.6 638.0,157.3 640.3,160.1 642.0,163.1 643.1,166.2 643.7,169.3" fill="#cccccc" stroke="#000" stroke-width="1" class="cr"/>
<polyline points="316,315 428.5,1" fill="none" stroke="#ff9900" stroke-width="1" class="cr"/>
<polyline points="470.6,1 675.4,133.7 534.6,527 316,386.9" fill="none" stroke="#ff9900" stroke-width="1" class="cr"/>
<text transform="matrix(0.84,0.545,-0.337,0.94,434.6,-2.6)" style="font-size:16px" font-weight="bold" fill="#ff9933" stroke="#ff9933" stroke-width="0.5">基准面1</text>
<path d="M433.2 214.5 C428 226 422.5 244 421.8 252.6 C419.5 262 418.5 272 419.2 279 C419.5 288 421 293 423 297 C425 301 427 304 429.7 305.3 C434 307.5 439 307 444 306.6 C450 306 456 304.5 462.6 303.4 C469 302.3 476 300.8 483.2 300.5 C488 300.3 492.5 300.8 496.8 302.6 C502 305 506.5 309.5 510 315.8 C513 321 515.5 326.5 516.6 331.6 C518 338 518.4 344 518.4 350 L518.4 367" fill="none" stroke="#999999" stroke-width="1.5"/>
<path d="M426.7 302.3l6 6m0 -6l-6 6M426.2 305.3h7" stroke="#999" stroke-width="1" fill="none"/>
<path d="M480.2 297.5l6 6m0 -6l-6 6M479.7 300.5h7" stroke="#999" stroke-width="1" fill="none"/>
<circle cx="433.2" cy="214.5" r="2.3" fill="#999966"/><circle cx="518.4" cy="367" r="2.3" fill="#999966"/>
<g stroke="#0000ff" fill="#0000ff" stroke-width="1.2"><path d="M589.4 364.5L586 342" fill="none"/><path d="M585.4 337L584.6 344.5L588.6 343.6Z" stroke="none"/><path d="M589.4 364.5L596 361.5" fill="none"/><path d="M602 359.2L594 360.2L596 364Z" stroke="none"/><path d="M586 361l7 7m0 -7l-7 7M585.5 364.5h8M589.4 361v7" fill="none" stroke-width="1"/></g>
<g transform="translate(508,530) rotate(31)"><path d="M-12.5 0Q-10 -4 -2 -4Q6 -3.5 11 -0.5Q6 3.5 -2 4Q-10 4 -12.5 0Z" fill="#ff7711"/><ellipse cx="-6" cy="-1" rx="5" ry="2.4" fill="#ff9922"/><path d="M10 -0.5L17 -4.5L15.5 0L17.5 3.5Z" fill="#e8908a"/><path d="M-3 -4L6 -6.5L8 -2Z" fill="#cc8899"/><path d="M0 -3.8L8 -1.6" stroke="#883322" stroke-width="0.9"/><path d="M-7 3.5L-8 7L-3 4.2Z" fill="#dd9999"/><path d="M1 4L3 6.5L6 3Z" fill="#dd9999"/><circle cx="-9" cy="-1" r="1" fill="#cccccc"/></g>
<path d="M502.5 513l1.5 6l1 -6z" fill="#8899aa"/><rect x="502.5" y="512" width="1.5" height="2.5" fill="#aaeeee"/>
<circle cx="648" cy="10.7" r="5.3" fill="#bbccee" stroke="#667799" stroke-width="1.2"/><circle cx="647.5" cy="10.2" r="3.6" fill="#ccccee" opacity="0.8"/><path d="M652 14.7l5 5" stroke="#224488" stroke-width="2.6" stroke-linecap="round"/><path d="M652.2 14.7l4.6 4.6" stroke="#99ccff" stroke-width="1.2" stroke-linecap="round"/><path d="M645 9.7v2M650.5 9.7v2M647 7.7h2M647 13.5h2" fill="none" stroke="#222" stroke-width="1.1"/>
<circle cx="671.7" cy="10.7" r="5.3" fill="#bbccee" stroke="#667799" stroke-width="1.2"/><circle cx="671.2" cy="10.2" r="3.6" fill="#ccccee" opacity="0.8"/><path d="M675.7 14.7l5 5" stroke="#224488" stroke-width="2.6" stroke-linecap="round"/><path d="M675.9 14.7l4.6 4.6" stroke="#99ccff" stroke-width="1.2" stroke-linecap="round"/><rect x="664.7" y="4.7" width="8" height="9" fill="none" stroke="#664499" stroke-width="1.2" stroke-dasharray="2 1.5"/><path d="M674.2 9.7v2h-2M668.7 12.2h2" fill="none" stroke="#222" stroke-width="1"/>
<path d="M688.5 6.5L691 5L703.5 15.5Q704.5 19 701 20.5Q698 20.5 696.5 18.5Z" fill="#66bbff" stroke="#223399" stroke-width="1"/><path d="M690 7L700 17" stroke="#ffffff" stroke-width="1.6"/><ellipse cx="700.8" cy="17.8" rx="2.6" ry="1.8" transform="rotate(-45 700.8 17.8)" fill="#ddeeff"/><path d="M698 7.8H704.5M700.5 5.2L697.5 7.8L700.5 10.4" fill="none" stroke="#2244cc" stroke-width="1.5"/>
<path d="M712 7L715 5.3H721L725.8 8V18L723.5 20.4L720 19V9.5Q717.5 8 715.5 9.5V19.5L712 18Z" fill="#66aaee" stroke="#223388" stroke-width="1"/><path d="M712.5 7.5H715.5V19L712.5 17.8Z" fill="#ddcc22"/><path d="M720 9H723.5V20L720 18.8Z" fill="#ddcc22"/><path d="M713 9l2 1.5l-2 1.5l2 1.5l-2 1.5l2 1.5M720.7 10.5l2 1.5l-2 1.5l2 1.5l-2 1.5l2 1.5" fill="none" stroke="#338833" stroke-width="0.8"/><path d="M715.5 6.5Q718.5 5.5 721 7.5L724.5 7.5" fill="none" stroke="#aaddff" stroke-width="1.5"/>
<path d="M734.5 10.5L739.5 5.5H749.5V15.5L745 20.5" fill="none" stroke="#224444" stroke-width="1.1"/><path d="M745 10.5L749.5 5.5M739.5 5.5V10" fill="none" stroke="#224444" stroke-width="1"/><rect x="734.6" y="10.8" width="10.2" height="9.4" fill="#99ccff" stroke="#2255cc" stroke-width="1.5"/><path d="M736 17L742 12" stroke="#ddf4ff" stroke-width="1.6"/><path d="M742.5 6V9.5M741 8.3L742.5 10L744 8.3M746 13.5H749M747.2 12L745.6 13.5L747.2 15" fill="none" stroke="#cc2222" stroke-width="1.3"/>
<path d="M767.5 9.5L771.5 5.2H783V16.5L778.8 20.5" fill="none" stroke="#443399" stroke-width="1.1"/><path d="M778.8 9.5L783 5.2" stroke="#443399" stroke-width="1"/><rect x="767.5" y="9.5" width="11.3" height="11" fill="none" stroke="#554488" stroke-width="1.3"/><rect x="773" y="10.2" width="5.2" height="9.6" fill="#88bbff"/><path d="M774 17.5L777.5 11.5" stroke="#ccccff" stroke-width="1.6"/><path d="M779.5 10L782.3 7V15.5L779.5 18.5Z" fill="#5588cc"/>
<g fill="#ccddee" stroke="#775599" stroke-width="1.1"><ellipse cx="802.6" cy="14.4" rx="2.5" ry="3.5"/><ellipse cx="809.9" cy="16.6" rx="2.6" ry="3.4"/></g><path d="M801.5 11Q803.5 7 805.5 7.5Q807 8.5 806.3 10.5M805 14.5L807.3 15.5M810.5 13.3Q812.5 10.5 814.3 11.5Q815.8 12.8 815.3 14.5" fill="none" stroke="#776688" stroke-width="1.1"/>
<path d="M754.3 12.8h5.4l-2.7 3.2z" fill="#224455"/>
<path d="M787 12.8h5.4l-2.7 3.2z" fill="#224455"/>
<path d="M820 12.8h5.4l-2.7 3.2z" fill="#224455"/>
<rect x="830" y="1" width="1" height="682" fill="#ffffff" opacity="0.18"/><rect x="316" y="682" width="515" height="1" fill="#ffffff" opacity="0.25"/>
</g>
<path d="M313 449H321Q322.5 449 322.5 450.5V474Q322.5 475.5 321 475.5H313Z" fill="#ccccff"/>
<path d="M314 448.5H321Q323.5 448.5 323.5 451V473.5Q323.5 476.5 320.5 476.5H316" fill="none" stroke="#336666" stroke-width="1"/>
<path d="M314 448.5H320.5Q322.5 448.5 322.5 450.5V474Q322.5 475.5 320.5 475.5H315" fill="none" stroke="#c4c4c4" stroke-width="1"/>
<path d="M313 475.5H320" stroke="#ffffff" stroke-width="1"/><path d="M313.5 476V478" stroke="#ffffff" stroke-width="1"/>
<path d="M321 451v6l-3.5 -3z" fill="#6666cc"/>
<path d="M321 459v6l-3.5 -3z" fill="#6666cc"/>
<path d="M321 467v6l-3.5 -3z" fill="#6666cc"/>
</svg></body></html>
